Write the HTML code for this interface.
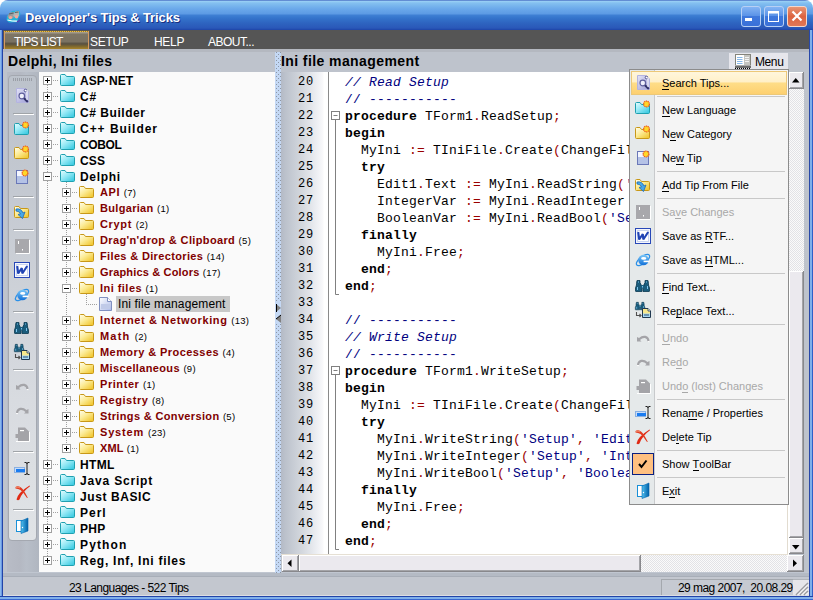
<!DOCTYPE html><html><head><meta charset="utf-8"><style>
*{margin:0;padding:0;box-sizing:border-box}
html,body{width:813px;height:600px;overflow:hidden;background:#fff;font-family:"Liberation Sans",sans-serif}
.a{position:absolute}
.t{position:absolute;white-space:nowrap;line-height:16px}
svg{position:absolute;left:0;top:0;overflow:visible}
#title{position:absolute;left:0;top:0;width:813px;height:30px;border-radius:8px 8px 0 0;
 background:linear-gradient(#2848b0 0,#9cd2f6 1px,#84c0f0 3px,#6aa8ea 9px,#5c9ae4 14px,#3f80d4 15px,#3474cc 18px,#2e64c0 23px,#2a58b8 28px,#1e44a8 30px)}
#ttext{position:absolute;left:25px;top:10px;color:#fff;font-weight:bold;font-size:13px;line-height:16px;text-shadow:1px 1px 0 #1a2e80;letter-spacing:-0.1px}
.wb{position:absolute;top:6px;width:20px;height:21px;border:1px solid #e8f0ff;border-radius:3px;
 background:linear-gradient(#78a8f0,#4a82e0 45%,#3a70d8 55%,#4a80e0)}
#mbar{position:absolute;left:3px;top:30px;width:806px;height:19px;background:#555555}
.mi{position:absolute;top:35px;color:#fff;font-size:12px;line-height:15px;letter-spacing:0px}
#panel{position:absolute;left:3px;top:49px;width:806px;height:547px;background:#bec3cc}
.hdr{position:absolute;font-weight:bold;font-size:13px;line-height:16px;color:#000;letter-spacing:0.7px}
.t1{font-weight:bold;font-size:12px;color:#000;letter-spacing:0.65px}
.t2{font-weight:bold;font-size:11px;color:#800000;letter-spacing:0.45px}
.cnt{font-size:9.5px;color:#000;font-weight:normal;letter-spacing:0.3px}
.ln{position:absolute;font-family:"Liberation Mono",monospace;font-size:13px;line-height:17px;color:#000;letter-spacing:0.2px;white-space:pre}
.kw{font-weight:bold}
.cm{color:#000080;font-style:italic}
.cd{color:#000080}
.sy{color:#9a0000}
.st{color:#000080}
.mt{position:absolute;left:662px;font-size:11px;line-height:14px;color:#000;white-space:nowrap}
.mt u{text-decoration:none;border-bottom:1px solid currentColor;line-height:11px;display:inline-block}
.dis{color:#a8a8a8}
.sep{position:absolute;left:657px;width:128px;height:1px;background:#c8c8c8}
</style></head><body>
<div class="a" style="left:0;top:0;width:813px;height:600px;background:#3262d0"></div>
<div class="a" style="left:0;top:0;width:813px;height:10px;background:#fff"></div>
<div class="a" style="left:0;top:30px;width:1px;height:570px;background:#8ab8ee"></div>
<div class="a" style="left:1px;top:30px;width:1px;height:570px;background:#6c9ae2"></div>
<div class="a" style="left:2px;top:30px;width:1px;height:570px;background:#2244a8"></div>
<div class="a" style="left:809px;top:30px;width:1px;height:570px;background:#2848a8"></div>
<div class="a" style="left:810px;top:30px;width:2px;height:570px;background:#80b0ea"></div>
<div class="a" style="left:812px;top:30px;width:1px;height:570px;background:#3060c8"></div>
<div class="a" style="left:0;top:596px;width:813px;height:1px;background:#2244a8"></div>
<div class="a" style="left:0;top:597px;width:813px;height:2px;background:#80b0ea"></div>
<div class="a" style="left:0;top:599px;width:813px;height:1px;background:#3a68d0"></div>
<div id="title"></div>
<div id="ttext">Developer's Tips &amp; Tricks</div>
<svg width="813" height="30" style="left:0;top:0">
<g transform="translate(6,10)">
<path d="M1,6 L6,1 L13,0.5 L14.5,4 L12,9 L13,12 L3,12.5 L0.5,10 Z" fill="#22b4d8"/>
<path d="M1.5,6 L4,2.5 L8,2 L7.5,8 L3,9 Z" fill="#9c9c9c"/><path d="M7,5.5 L9,1.5 L13,1 L13,6 L9.5,8 Z" fill="#b4b4b4"/>
<path d="M3,4 L7.5,3 M9,2.5 L12.5,2" stroke="#606060" stroke-width="1.2"/>
<circle cx="4.5" cy="7.6" r="1.7" fill="#f4a898"/><circle cx="10.5" cy="6.8" r="1.7" fill="#f4a898"/>
<path d="M1.5,10 Q6,11.2 11,11.2" stroke="#fff" stroke-width="1.2" fill="none"/>
<path d="M11,12 L13.5,10.5" stroke="#6030b0" stroke-width="1.4"/>
</g>
<defs><linearGradient id="wbg" x1="0" y1="0" x2="0" y2="1"><stop offset="0" stop-color="#86b6f4"/><stop offset="0.45" stop-color="#5c94e8"/><stop offset="0.5" stop-color="#3e78dc"/><stop offset="1" stop-color="#3a70d8"/></linearGradient>
<linearGradient id="wbc" x1="0" y1="0" x2="0" y2="1"><stop offset="0" stop-color="#e89878"/><stop offset="0.5" stop-color="#dc6440"/><stop offset="1" stop-color="#e07858"/></linearGradient></defs>
<rect x="741.5" y="6.5" width="19" height="20" rx="2.5" fill="url(#wbg)" stroke="#b8d0f4"/>
<rect x="745" y="18" width="7" height="3" fill="#fff"/>
<rect x="764.5" y="6.5" width="19" height="20" rx="2.5" fill="url(#wbg)" stroke="#b8d0f4"/>
<rect x="768.5" y="11.5" width="10" height="10" fill="none" stroke="#fff"/>
<rect x="768" y="11" width="11" height="2.5" fill="#fff"/>
<rect x="787.5" y="6.5" width="19" height="20" rx="2.5" fill="url(#wbc)" stroke="#f4d8cc"/>
<path d="M792.5,11.5 L801.5,20.5 M801.5,11.5 L792.5,20.5" stroke="#fff" stroke-width="2.2"/>
</svg>
<div id="mbar"></div>
<div class="a" style="left:4px;top:31px;width:85px;height:18px;border-left:1px solid #d89a60;border-right:1px solid #d89a60;border-top:1px dotted #f0c040;background:linear-gradient(#a8a090 0,#a09888 1px,#7e7666 2px,#7a7262 10px,#5e5646 11px,#5a5242 12px,#786430 14px,#a88428 17px)"></div>
<div class="mi" style="left:14px;letter-spacing:-0.75px">TIPS LIST</div>
<div class="mi" style="left:90px;letter-spacing:-0.3px">SETUP</div>
<div class="mi" style="left:154px;letter-spacing:-0.3px">HELP</div>
<div class="mi" style="left:208px;letter-spacing:-0.5px">ABOUT...</div>
<div id="panel"></div>
<div class="a" style="left:3px;top:49px;width:806px;height:3px;background:#b4b8c0"></div>
<div class="hdr" style="left:8px;top:53px;font-size:14px;letter-spacing:0.32px">Delphi, Ini files</div>
<div class="hdr" style="left:281px;top:53px;font-size:14px;letter-spacing:0.41px">Ini file management</div>
<div class="a" style="left:7px;top:72px;width:32px;height:500px;background:linear-gradient(90deg,#b8bcc6,#b4b8c2 40%,#b8bec8 60%,#b0b6c0)"></div>
<div class="a" style="left:8px;top:75px;width:29px;height:466px;border:1px solid #a4a8b0;border-radius:4px;background:linear-gradient(#bcc2cb,#c4c9d1 25%,#d8dbe0 70%,#e0e3e6)"></div>
<div class="a" style="left:3px;top:572px;width:806px;height:1px;background:#c0c6d0"></div>
<div class="a" style="left:3px;top:573px;width:806px;height:3px;background:#b4bac4"></div>
<div class="a" style="left:3px;top:576px;width:806px;height:1px;background:#a8aeb8"></div>
<div class="a" style="left:3px;top:577px;width:806px;height:18px;background:#c3c7cf"></div>
<div class="a" style="left:3px;top:595px;width:806px;height:1px;background:#dcdee2"></div>
<div class="t" style="left:69px;top:581px;font-size:12px;line-height:15px;letter-spacing:-0.55px">23 Languages - 522 Tips</div>
<div class="a" style="left:661px;top:579px;width:132px;height:16px;border-left:1px solid #a4a8ae;border-top:1px solid #a4a8ae;background:#c6cad2"></div>
<div class="t" style="left:678px;top:581px;font-size:12px;line-height:15px;white-space:pre;letter-spacing:-0.55px">29 mag 2007,  20.08.29</div>
<div class="a" style="left:793px;top:579px;width:16px;height:16px;background:#e6e6ea;border-top:1px solid #b0b4ba"></div>
<svg width="813" height="600"><path d="M796,595 L808,583 M800,595 L808,587 M804,595 L808,591" stroke="#9c9ca0" stroke-width="1.6"/><path d="M797.5,595 L808,584.5 M801.5,595 L808,588.5 M805.5,595 L808,592.5" stroke="#fff" stroke-width="0.9"/></svg>
<div class="a" style="left:39px;top:72px;width:236px;height:500px;background:#fafafa"></div>
<div class="t t1" style="left:80px;top:73px;letter-spacing:0.064px">ASP·NET</div>
<div class="t t1" style="left:80px;top:89px;letter-spacing:0.900px">C#</div>
<div class="t t1" style="left:80px;top:105px;letter-spacing:0.550px">C# Builder</div>
<div class="t t1" style="left:80px;top:121px;letter-spacing:0.968px">C++ Builder</div>
<div class="t t1" style="left:80px;top:137px;letter-spacing:-0.390px">COBOL</div>
<div class="t t1" style="left:80px;top:153px;letter-spacing:0.117px">CSS</div>
<div class="t t1" style="left:80px;top:169px;letter-spacing:0.700px">Delphi</div>
<div class="t t2" style="left:100px;top:184px;letter-spacing:0.583px">API <span class="cnt">(7)</span></div>
<div class="t t2" style="left:100px;top:200px;letter-spacing:0.317px">Bulgarian <span class="cnt">(1)</span></div>
<div class="t t2" style="left:100px;top:216px;letter-spacing:0.650px">Crypt <span class="cnt">(2)</span></div>
<div class="t t2" style="left:100px;top:232px;letter-spacing:0.363px">Drag'n'drop &amp; Clipboard <span class="cnt">(5)</span></div>
<div class="t t2" style="left:100px;top:248px;letter-spacing:0.350px">Files &amp; Directories <span class="cnt">(14)</span></div>
<div class="t t2" style="left:100px;top:264px;letter-spacing:0.168px">Graphics &amp; Colors <span class="cnt">(17)</span></div>
<div class="t t2" style="left:100px;top:280px;letter-spacing:0.461px">Ini files <span class="cnt">(1)</span></div>
<div class="a" style="left:116px;top:296px;width:114px;height:16px;background:#c8c8c8"></div>
<div class="t" style="left:118px;top:296px;font-size:12px;letter-spacing:0.15px">Ini file management</div>
<div class="t t2" style="left:100px;top:312px;letter-spacing:0.631px">Internet &amp; Networking <span class="cnt">(13)</span></div>
<div class="t t2" style="left:100px;top:328px;letter-spacing:1.200px">Math <span class="cnt">(2)</span></div>
<div class="t t2" style="left:100px;top:344px;letter-spacing:0.428px">Memory &amp; Processes <span class="cnt">(4)</span></div>
<div class="t t2" style="left:100px;top:360px;letter-spacing:0.365px">Miscellaneous <span class="cnt">(9)</span></div>
<div class="t t2" style="left:100px;top:376px;letter-spacing:0.564px">Printer <span class="cnt">(1)</span></div>
<div class="t t2" style="left:100px;top:392px;letter-spacing:0.550px">Registry <span class="cnt">(8)</span></div>
<div class="t t2" style="left:100px;top:408px;letter-spacing:0.350px">Strings &amp; Conversion <span class="cnt">(5)</span></div>
<div class="t t2" style="left:100px;top:424px;letter-spacing:0.817px">System <span class="cnt">(23)</span></div>
<div class="t t2" style="left:100px;top:440px;letter-spacing:0.150px">XML <span class="cnt">(1)</span></div>
<div class="t t1" style="left:80px;top:457px;letter-spacing:0.325px">HTML</div>
<div class="t t1" style="left:80px;top:473px;letter-spacing:0.823px">Java Script</div>
<div class="t t1" style="left:80px;top:489px;letter-spacing:0.580px">Just BASIC</div>
<div class="t t1" style="left:80px;top:505px;letter-spacing:0.975px">Perl</div>
<div class="t t1" style="left:80px;top:521px;letter-spacing:0.283px">PHP</div>
<div class="t t1" style="left:80px;top:537px;letter-spacing:1.150px">Python</div>
<div class="t t1" style="left:80px;top:553px;letter-spacing:0.745px">Reg, Inf, Ini files</div>
<svg width="813" height="600"><defs><linearGradient id="gc" x1="0" y1="0" x2="0.9" y2="1"><stop offset="0" stop-color="#e8fdff"/><stop offset="0.45" stop-color="#98eaf6"/><stop offset="1" stop-color="#34c8e0"/></linearGradient><linearGradient id="gy" x1="0" y1="0" x2="0.9" y2="1"><stop offset="0" stop-color="#fffef0"/><stop offset="0.45" stop-color="#fcec98"/><stop offset="1" stop-color="#f0c428"/></linearGradient><linearGradient id="gd" x1="0" y1="0" x2="1" y2="1"><stop offset="0" stop-color="#ffffff"/><stop offset="1" stop-color="#aab8e8"/></linearGradient></defs><rect x="47" y="85" width="1" height="1" fill="#a0a0a0"/><rect x="47" y="87" width="1" height="1" fill="#a0a0a0"/><rect x="47" y="89" width="1" height="1" fill="#a0a0a0"/><rect x="47" y="91" width="1" height="1" fill="#a0a0a0"/><rect x="47" y="93" width="1" height="1" fill="#a0a0a0"/><rect x="47" y="95" width="1" height="1" fill="#a0a0a0"/><rect x="47" y="97" width="1" height="1" fill="#a0a0a0"/><rect x="47" y="99" width="1" height="1" fill="#a0a0a0"/><rect x="47" y="101" width="1" height="1" fill="#a0a0a0"/><rect x="47" y="103" width="1" height="1" fill="#a0a0a0"/><rect x="47" y="105" width="1" height="1" fill="#a0a0a0"/><rect x="47" y="107" width="1" height="1" fill="#a0a0a0"/><rect x="47" y="109" width="1" height="1" fill="#a0a0a0"/><rect x="47" y="111" width="1" height="1" fill="#a0a0a0"/><rect x="47" y="113" width="1" height="1" fill="#a0a0a0"/><rect x="47" y="115" width="1" height="1" fill="#a0a0a0"/><rect x="47" y="117" width="1" height="1" fill="#a0a0a0"/><rect x="47" y="119" width="1" height="1" fill="#a0a0a0"/><rect x="47" y="121" width="1" height="1" fill="#a0a0a0"/><rect x="47" y="123" width="1" height="1" fill="#a0a0a0"/><rect x="47" y="125" width="1" height="1" fill="#a0a0a0"/><rect x="47" y="127" width="1" height="1" fill="#a0a0a0"/><rect x="47" y="129" width="1" height="1" fill="#a0a0a0"/><rect x="47" y="131" width="1" height="1" fill="#a0a0a0"/><rect x="47" y="133" width="1" height="1" fill="#a0a0a0"/><rect x="47" y="135" width="1" height="1" fill="#a0a0a0"/><rect x="47" y="137" width="1" height="1" fill="#a0a0a0"/><rect x="47" y="139" width="1" height="1" fill="#a0a0a0"/><rect x="47" y="141" width="1" height="1" fill="#a0a0a0"/><rect x="47" y="143" width="1" height="1" fill="#a0a0a0"/><rect x="47" y="145" width="1" height="1" fill="#a0a0a0"/><rect x="47" y="147" width="1" height="1" fill="#a0a0a0"/><rect x="47" y="149" width="1" height="1" fill="#a0a0a0"/><rect x="47" y="151" width="1" height="1" fill="#a0a0a0"/><rect x="47" y="153" width="1" height="1" fill="#a0a0a0"/><rect x="47" y="155" width="1" height="1" fill="#a0a0a0"/><rect x="47" y="157" width="1" height="1" fill="#a0a0a0"/><rect x="47" y="159" width="1" height="1" fill="#a0a0a0"/><rect x="47" y="161" width="1" height="1" fill="#a0a0a0"/><rect x="47" y="163" width="1" height="1" fill="#a0a0a0"/><rect x="47" y="165" width="1" height="1" fill="#a0a0a0"/><rect x="47" y="167" width="1" height="1" fill="#a0a0a0"/><rect x="47" y="169" width="1" height="1" fill="#a0a0a0"/><rect x="47" y="171" width="1" height="1" fill="#a0a0a0"/><rect x="47" y="173" width="1" height="1" fill="#a0a0a0"/><rect x="47" y="175" width="1" height="1" fill="#a0a0a0"/><rect x="47" y="177" width="1" height="1" fill="#a0a0a0"/><rect x="47" y="179" width="1" height="1" fill="#a0a0a0"/><rect x="47" y="181" width="1" height="1" fill="#a0a0a0"/><rect x="47" y="183" width="1" height="1" fill="#a0a0a0"/><rect x="47" y="185" width="1" height="1" fill="#a0a0a0"/><rect x="47" y="187" width="1" height="1" fill="#a0a0a0"/><rect x="47" y="189" width="1" height="1" fill="#a0a0a0"/><rect x="47" y="191" width="1" height="1" fill="#a0a0a0"/><rect x="47" y="193" width="1" height="1" fill="#a0a0a0"/><rect x="47" y="195" width="1" height="1" fill="#a0a0a0"/><rect x="47" y="197" width="1" height="1" fill="#a0a0a0"/><rect x="47" y="199" width="1" height="1" fill="#a0a0a0"/><rect x="47" y="201" width="1" height="1" fill="#a0a0a0"/><rect x="47" y="203" width="1" height="1" fill="#a0a0a0"/><rect x="47" y="205" width="1" height="1" fill="#a0a0a0"/><rect x="47" y="207" width="1" height="1" fill="#a0a0a0"/><rect x="47" y="209" width="1" height="1" fill="#a0a0a0"/><rect x="47" y="211" width="1" height="1" fill="#a0a0a0"/><rect x="47" y="213" width="1" height="1" fill="#a0a0a0"/><rect x="47" y="215" width="1" height="1" fill="#a0a0a0"/><rect x="47" y="217" width="1" height="1" fill="#a0a0a0"/><rect x="47" y="219" width="1" height="1" fill="#a0a0a0"/><rect x="47" y="221" width="1" height="1" fill="#a0a0a0"/><rect x="47" y="223" width="1" height="1" fill="#a0a0a0"/><rect x="47" y="225" width="1" height="1" fill="#a0a0a0"/><rect x="47" y="227" width="1" height="1" fill="#a0a0a0"/><rect x="47" y="229" width="1" height="1" fill="#a0a0a0"/><rect x="47" y="231" width="1" height="1" fill="#a0a0a0"/><rect x="47" y="233" width="1" height="1" fill="#a0a0a0"/><rect x="47" y="235" width="1" height="1" fill="#a0a0a0"/><rect x="47" y="237" width="1" height="1" fill="#a0a0a0"/><rect x="47" y="239" width="1" height="1" fill="#a0a0a0"/><rect x="47" y="241" width="1" height="1" fill="#a0a0a0"/><rect x="47" y="243" width="1" height="1" fill="#a0a0a0"/><rect x="47" y="245" width="1" height="1" fill="#a0a0a0"/><rect x="47" y="247" width="1" height="1" fill="#a0a0a0"/><rect x="47" y="249" width="1" height="1" fill="#a0a0a0"/><rect x="47" y="251" width="1" height="1" fill="#a0a0a0"/><rect x="47" y="253" width="1" height="1" fill="#a0a0a0"/><rect x="47" y="255" width="1" height="1" fill="#a0a0a0"/><rect x="47" y="257" width="1" height="1" fill="#a0a0a0"/><rect x="47" y="259" width="1" height="1" fill="#a0a0a0"/><rect x="47" y="261" width="1" height="1" fill="#a0a0a0"/><rect x="47" y="263" width="1" height="1" fill="#a0a0a0"/><rect x="47" y="265" width="1" height="1" fill="#a0a0a0"/><rect x="47" y="267" width="1" height="1" fill="#a0a0a0"/><rect x="47" y="269" width="1" height="1" fill="#a0a0a0"/><rect x="47" y="271" width="1" height="1" fill="#a0a0a0"/><rect x="47" y="273" width="1" height="1" fill="#a0a0a0"/><rect x="47" y="275" width="1" height="1" fill="#a0a0a0"/><rect x="47" y="277" width="1" height="1" fill="#a0a0a0"/><rect x="47" y="279" width="1" height="1" fill="#a0a0a0"/><rect x="47" y="281" width="1" height="1" fill="#a0a0a0"/><rect x="47" y="283" width="1" height="1" fill="#a0a0a0"/><rect x="47" y="285" width="1" height="1" fill="#a0a0a0"/><rect x="47" y="287" width="1" height="1" fill="#a0a0a0"/><rect x="47" y="289" width="1" height="1" fill="#a0a0a0"/><rect x="47" y="291" width="1" height="1" fill="#a0a0a0"/><rect x="47" y="293" width="1" height="1" fill="#a0a0a0"/><rect x="47" y="295" width="1" height="1" fill="#a0a0a0"/><rect x="47" y="297" width="1" height="1" fill="#a0a0a0"/><rect x="47" y="299" width="1" height="1" fill="#a0a0a0"/><rect x="47" y="301" width="1" height="1" fill="#a0a0a0"/><rect x="47" y="303" width="1" height="1" fill="#a0a0a0"/><rect x="47" y="305" width="1" height="1" fill="#a0a0a0"/><rect x="47" y="307" width="1" height="1" fill="#a0a0a0"/><rect x="47" y="309" width="1" height="1" fill="#a0a0a0"/><rect x="47" y="311" width="1" height="1" fill="#a0a0a0"/><rect x="47" y="313" width="1" height="1" fill="#a0a0a0"/><rect x="47" y="315" width="1" height="1" fill="#a0a0a0"/><rect x="47" y="317" width="1" height="1" fill="#a0a0a0"/><rect x="47" y="319" width="1" height="1" fill="#a0a0a0"/><rect x="47" y="321" width="1" height="1" fill="#a0a0a0"/><rect x="47" y="323" width="1" height="1" fill="#a0a0a0"/><rect x="47" y="325" width="1" height="1" fill="#a0a0a0"/><rect x="47" y="327" width="1" height="1" fill="#a0a0a0"/><rect x="47" y="329" width="1" height="1" fill="#a0a0a0"/><rect x="47" y="331" width="1" height="1" fill="#a0a0a0"/><rect x="47" y="333" width="1" height="1" fill="#a0a0a0"/><rect x="47" y="335" width="1" height="1" fill="#a0a0a0"/><rect x="47" y="337" width="1" height="1" fill="#a0a0a0"/><rect x="47" y="339" width="1" height="1" fill="#a0a0a0"/><rect x="47" y="341" width="1" height="1" fill="#a0a0a0"/><rect x="47" y="343" width="1" height="1" fill="#a0a0a0"/><rect x="47" y="345" width="1" height="1" fill="#a0a0a0"/><rect x="47" y="347" width="1" height="1" fill="#a0a0a0"/><rect x="47" y="349" width="1" height="1" fill="#a0a0a0"/><rect x="47" y="351" width="1" height="1" fill="#a0a0a0"/><rect x="47" y="353" width="1" height="1" fill="#a0a0a0"/><rect x="47" y="355" width="1" height="1" fill="#a0a0a0"/><rect x="47" y="357" width="1" height="1" fill="#a0a0a0"/><rect x="47" y="359" width="1" height="1" fill="#a0a0a0"/><rect x="47" y="361" width="1" height="1" fill="#a0a0a0"/><rect x="47" y="363" width="1" height="1" fill="#a0a0a0"/><rect x="47" y="365" width="1" height="1" fill="#a0a0a0"/><rect x="47" y="367" width="1" height="1" fill="#a0a0a0"/><rect x="47" y="369" width="1" height="1" fill="#a0a0a0"/><rect x="47" y="371" width="1" height="1" fill="#a0a0a0"/><rect x="47" y="373" width="1" height="1" fill="#a0a0a0"/><rect x="47" y="375" width="1" height="1" fill="#a0a0a0"/><rect x="47" y="377" width="1" height="1" fill="#a0a0a0"/><rect x="47" y="379" width="1" height="1" fill="#a0a0a0"/><rect x="47" y="381" width="1" height="1" fill="#a0a0a0"/><rect x="47" y="383" width="1" height="1" fill="#a0a0a0"/><rect x="47" y="385" width="1" height="1" fill="#a0a0a0"/><rect x="47" y="387" width="1" height="1" fill="#a0a0a0"/><rect x="47" y="389" width="1" height="1" fill="#a0a0a0"/><rect x="47" y="391" width="1" height="1" fill="#a0a0a0"/><rect x="47" y="393" width="1" height="1" fill="#a0a0a0"/><rect x="47" y="395" width="1" height="1" fill="#a0a0a0"/><rect x="47" y="397" width="1" height="1" fill="#a0a0a0"/><rect x="47" y="399" width="1" height="1" fill="#a0a0a0"/><rect x="47" y="401" width="1" height="1" fill="#a0a0a0"/><rect x="47" y="403" width="1" height="1" fill="#a0a0a0"/><rect x="47" y="405" width="1" height="1" fill="#a0a0a0"/><rect x="47" y="407" width="1" height="1" fill="#a0a0a0"/><rect x="47" y="409" width="1" height="1" fill="#a0a0a0"/><rect x="47" y="411" width="1" height="1" fill="#a0a0a0"/><rect x="47" y="413" width="1" height="1" fill="#a0a0a0"/><rect x="47" y="415" width="1" height="1" fill="#a0a0a0"/><rect x="47" y="417" width="1" height="1" fill="#a0a0a0"/><rect x="47" y="419" width="1" height="1" fill="#a0a0a0"/><rect x="47" y="421" width="1" height="1" fill="#a0a0a0"/><rect x="47" y="423" width="1" height="1" fill="#a0a0a0"/><rect x="47" y="425" width="1" height="1" fill="#a0a0a0"/><rect x="47" y="427" width="1" height="1" fill="#a0a0a0"/><rect x="47" y="429" width="1" height="1" fill="#a0a0a0"/><rect x="47" y="431" width="1" height="1" fill="#a0a0a0"/><rect x="47" y="433" width="1" height="1" fill="#a0a0a0"/><rect x="47" y="435" width="1" height="1" fill="#a0a0a0"/><rect x="47" y="437" width="1" height="1" fill="#a0a0a0"/><rect x="47" y="439" width="1" height="1" fill="#a0a0a0"/><rect x="47" y="441" width="1" height="1" fill="#a0a0a0"/><rect x="47" y="443" width="1" height="1" fill="#a0a0a0"/><rect x="47" y="445" width="1" height="1" fill="#a0a0a0"/><rect x="47" y="447" width="1" height="1" fill="#a0a0a0"/><rect x="47" y="449" width="1" height="1" fill="#a0a0a0"/><rect x="47" y="451" width="1" height="1" fill="#a0a0a0"/><rect x="47" y="453" width="1" height="1" fill="#a0a0a0"/><rect x="47" y="455" width="1" height="1" fill="#a0a0a0"/><rect x="47" y="457" width="1" height="1" fill="#a0a0a0"/><rect x="47" y="459" width="1" height="1" fill="#a0a0a0"/><rect x="47" y="461" width="1" height="1" fill="#a0a0a0"/><rect x="47" y="463" width="1" height="1" fill="#a0a0a0"/><rect x="47" y="465" width="1" height="1" fill="#a0a0a0"/><rect x="47" y="467" width="1" height="1" fill="#a0a0a0"/><rect x="47" y="469" width="1" height="1" fill="#a0a0a0"/><rect x="47" y="471" width="1" height="1" fill="#a0a0a0"/><rect x="47" y="473" width="1" height="1" fill="#a0a0a0"/><rect x="47" y="475" width="1" height="1" fill="#a0a0a0"/><rect x="47" y="477" width="1" height="1" fill="#a0a0a0"/><rect x="47" y="479" width="1" height="1" fill="#a0a0a0"/><rect x="47" y="481" width="1" height="1" fill="#a0a0a0"/><rect x="47" y="483" width="1" height="1" fill="#a0a0a0"/><rect x="47" y="485" width="1" height="1" fill="#a0a0a0"/><rect x="47" y="487" width="1" height="1" fill="#a0a0a0"/><rect x="47" y="489" width="1" height="1" fill="#a0a0a0"/><rect x="47" y="491" width="1" height="1" fill="#a0a0a0"/><rect x="47" y="493" width="1" height="1" fill="#a0a0a0"/><rect x="47" y="495" width="1" height="1" fill="#a0a0a0"/><rect x="47" y="497" width="1" height="1" fill="#a0a0a0"/><rect x="47" y="499" width="1" height="1" fill="#a0a0a0"/><rect x="47" y="501" width="1" height="1" fill="#a0a0a0"/><rect x="47" y="503" width="1" height="1" fill="#a0a0a0"/><rect x="47" y="505" width="1" height="1" fill="#a0a0a0"/><rect x="47" y="507" width="1" height="1" fill="#a0a0a0"/><rect x="47" y="509" width="1" height="1" fill="#a0a0a0"/><rect x="47" y="511" width="1" height="1" fill="#a0a0a0"/><rect x="47" y="513" width="1" height="1" fill="#a0a0a0"/><rect x="47" y="515" width="1" height="1" fill="#a0a0a0"/><rect x="47" y="517" width="1" height="1" fill="#a0a0a0"/><rect x="47" y="519" width="1" height="1" fill="#a0a0a0"/><rect x="47" y="521" width="1" height="1" fill="#a0a0a0"/><rect x="47" y="523" width="1" height="1" fill="#a0a0a0"/><rect x="47" y="525" width="1" height="1" fill="#a0a0a0"/><rect x="47" y="527" width="1" height="1" fill="#a0a0a0"/><rect x="47" y="529" width="1" height="1" fill="#a0a0a0"/><rect x="47" y="531" width="1" height="1" fill="#a0a0a0"/><rect x="47" y="533" width="1" height="1" fill="#a0a0a0"/><rect x="47" y="535" width="1" height="1" fill="#a0a0a0"/><rect x="47" y="537" width="1" height="1" fill="#a0a0a0"/><rect x="47" y="539" width="1" height="1" fill="#a0a0a0"/><rect x="47" y="541" width="1" height="1" fill="#a0a0a0"/><rect x="47" y="543" width="1" height="1" fill="#a0a0a0"/><rect x="47" y="545" width="1" height="1" fill="#a0a0a0"/><rect x="47" y="547" width="1" height="1" fill="#a0a0a0"/><rect x="47" y="549" width="1" height="1" fill="#a0a0a0"/><rect x="47" y="551" width="1" height="1" fill="#a0a0a0"/><rect x="47" y="553" width="1" height="1" fill="#a0a0a0"/><rect x="47" y="555" width="1" height="1" fill="#a0a0a0"/><rect x="66" y="182" width="1" height="1" fill="#a0a0a0"/><rect x="66" y="184" width="1" height="1" fill="#a0a0a0"/><rect x="66" y="186" width="1" height="1" fill="#a0a0a0"/><rect x="66" y="188" width="1" height="1" fill="#a0a0a0"/><rect x="66" y="190" width="1" height="1" fill="#a0a0a0"/><rect x="66" y="192" width="1" height="1" fill="#a0a0a0"/><rect x="66" y="194" width="1" height="1" fill="#a0a0a0"/><rect x="66" y="196" width="1" height="1" fill="#a0a0a0"/><rect x="66" y="198" width="1" height="1" fill="#a0a0a0"/><rect x="66" y="200" width="1" height="1" fill="#a0a0a0"/><rect x="66" y="202" width="1" height="1" fill="#a0a0a0"/><rect x="66" y="204" width="1" height="1" fill="#a0a0a0"/><rect x="66" y="206" width="1" height="1" fill="#a0a0a0"/><rect x="66" y="208" width="1" height="1" fill="#a0a0a0"/><rect x="66" y="210" width="1" height="1" fill="#a0a0a0"/><rect x="66" y="212" width="1" height="1" fill="#a0a0a0"/><rect x="66" y="214" width="1" height="1" fill="#a0a0a0"/><rect x="66" y="216" width="1" height="1" fill="#a0a0a0"/><rect x="66" y="218" width="1" height="1" fill="#a0a0a0"/><rect x="66" y="220" width="1" height="1" fill="#a0a0a0"/><rect x="66" y="222" width="1" height="1" fill="#a0a0a0"/><rect x="66" y="224" width="1" height="1" fill="#a0a0a0"/><rect x="66" y="226" width="1" height="1" fill="#a0a0a0"/><rect x="66" y="228" width="1" height="1" fill="#a0a0a0"/><rect x="66" y="230" width="1" height="1" fill="#a0a0a0"/><rect x="66" y="232" width="1" height="1" fill="#a0a0a0"/><rect x="66" y="234" width="1" height="1" fill="#a0a0a0"/><rect x="66" y="236" width="1" height="1" fill="#a0a0a0"/><rect x="66" y="238" width="1" height="1" fill="#a0a0a0"/><rect x="66" y="240" width="1" height="1" fill="#a0a0a0"/><rect x="66" y="242" width="1" height="1" fill="#a0a0a0"/><rect x="66" y="244" width="1" height="1" fill="#a0a0a0"/><rect x="66" y="246" width="1" height="1" fill="#a0a0a0"/><rect x="66" y="248" width="1" height="1" fill="#a0a0a0"/><rect x="66" y="250" width="1" height="1" fill="#a0a0a0"/><rect x="66" y="252" width="1" height="1" fill="#a0a0a0"/><rect x="66" y="254" width="1" height="1" fill="#a0a0a0"/><rect x="66" y="256" width="1" height="1" fill="#a0a0a0"/><rect x="66" y="258" width="1" height="1" fill="#a0a0a0"/><rect x="66" y="260" width="1" height="1" fill="#a0a0a0"/><rect x="66" y="262" width="1" height="1" fill="#a0a0a0"/><rect x="66" y="264" width="1" height="1" fill="#a0a0a0"/><rect x="66" y="266" width="1" height="1" fill="#a0a0a0"/><rect x="66" y="268" width="1" height="1" fill="#a0a0a0"/><rect x="66" y="270" width="1" height="1" fill="#a0a0a0"/><rect x="66" y="272" width="1" height="1" fill="#a0a0a0"/><rect x="66" y="274" width="1" height="1" fill="#a0a0a0"/><rect x="66" y="276" width="1" height="1" fill="#a0a0a0"/><rect x="66" y="278" width="1" height="1" fill="#a0a0a0"/><rect x="66" y="280" width="1" height="1" fill="#a0a0a0"/><rect x="66" y="282" width="1" height="1" fill="#a0a0a0"/><rect x="66" y="284" width="1" height="1" fill="#a0a0a0"/><rect x="66" y="286" width="1" height="1" fill="#a0a0a0"/><rect x="66" y="288" width="1" height="1" fill="#a0a0a0"/><rect x="66" y="290" width="1" height="1" fill="#a0a0a0"/><rect x="66" y="292" width="1" height="1" fill="#a0a0a0"/><rect x="66" y="294" width="1" height="1" fill="#a0a0a0"/><rect x="66" y="296" width="1" height="1" fill="#a0a0a0"/><rect x="66" y="298" width="1" height="1" fill="#a0a0a0"/><rect x="66" y="300" width="1" height="1" fill="#a0a0a0"/><rect x="66" y="302" width="1" height="1" fill="#a0a0a0"/><rect x="66" y="304" width="1" height="1" fill="#a0a0a0"/><rect x="66" y="306" width="1" height="1" fill="#a0a0a0"/><rect x="66" y="308" width="1" height="1" fill="#a0a0a0"/><rect x="66" y="310" width="1" height="1" fill="#a0a0a0"/><rect x="66" y="312" width="1" height="1" fill="#a0a0a0"/><rect x="66" y="314" width="1" height="1" fill="#a0a0a0"/><rect x="66" y="316" width="1" height="1" fill="#a0a0a0"/><rect x="66" y="318" width="1" height="1" fill="#a0a0a0"/><rect x="66" y="320" width="1" height="1" fill="#a0a0a0"/><rect x="66" y="322" width="1" height="1" fill="#a0a0a0"/><rect x="66" y="324" width="1" height="1" fill="#a0a0a0"/><rect x="66" y="326" width="1" height="1" fill="#a0a0a0"/><rect x="66" y="328" width="1" height="1" fill="#a0a0a0"/><rect x="66" y="330" width="1" height="1" fill="#a0a0a0"/><rect x="66" y="332" width="1" height="1" fill="#a0a0a0"/><rect x="66" y="334" width="1" height="1" fill="#a0a0a0"/><rect x="66" y="336" width="1" height="1" fill="#a0a0a0"/><rect x="66" y="338" width="1" height="1" fill="#a0a0a0"/><rect x="66" y="340" width="1" height="1" fill="#a0a0a0"/><rect x="66" y="342" width="1" height="1" fill="#a0a0a0"/><rect x="66" y="344" width="1" height="1" fill="#a0a0a0"/><rect x="66" y="346" width="1" height="1" fill="#a0a0a0"/><rect x="66" y="348" width="1" height="1" fill="#a0a0a0"/><rect x="66" y="350" width="1" height="1" fill="#a0a0a0"/><rect x="66" y="352" width="1" height="1" fill="#a0a0a0"/><rect x="66" y="354" width="1" height="1" fill="#a0a0a0"/><rect x="66" y="356" width="1" height="1" fill="#a0a0a0"/><rect x="66" y="358" width="1" height="1" fill="#a0a0a0"/><rect x="66" y="360" width="1" height="1" fill="#a0a0a0"/><rect x="66" y="362" width="1" height="1" fill="#a0a0a0"/><rect x="66" y="364" width="1" height="1" fill="#a0a0a0"/><rect x="66" y="366" width="1" height="1" fill="#a0a0a0"/><rect x="66" y="368" width="1" height="1" fill="#a0a0a0"/><rect x="66" y="370" width="1" height="1" fill="#a0a0a0"/><rect x="66" y="372" width="1" height="1" fill="#a0a0a0"/><rect x="66" y="374" width="1" height="1" fill="#a0a0a0"/><rect x="66" y="376" width="1" height="1" fill="#a0a0a0"/><rect x="66" y="378" width="1" height="1" fill="#a0a0a0"/><rect x="66" y="380" width="1" height="1" fill="#a0a0a0"/><rect x="66" y="382" width="1" height="1" fill="#a0a0a0"/><rect x="66" y="384" width="1" height="1" fill="#a0a0a0"/><rect x="66" y="386" width="1" height="1" fill="#a0a0a0"/><rect x="66" y="388" width="1" height="1" fill="#a0a0a0"/><rect x="66" y="390" width="1" height="1" fill="#a0a0a0"/><rect x="66" y="392" width="1" height="1" fill="#a0a0a0"/><rect x="66" y="394" width="1" height="1" fill="#a0a0a0"/><rect x="66" y="396" width="1" height="1" fill="#a0a0a0"/><rect x="66" y="398" width="1" height="1" fill="#a0a0a0"/><rect x="66" y="400" width="1" height="1" fill="#a0a0a0"/><rect x="66" y="402" width="1" height="1" fill="#a0a0a0"/><rect x="66" y="404" width="1" height="1" fill="#a0a0a0"/><rect x="66" y="406" width="1" height="1" fill="#a0a0a0"/><rect x="66" y="408" width="1" height="1" fill="#a0a0a0"/><rect x="66" y="410" width="1" height="1" fill="#a0a0a0"/><rect x="66" y="412" width="1" height="1" fill="#a0a0a0"/><rect x="66" y="414" width="1" height="1" fill="#a0a0a0"/><rect x="66" y="416" width="1" height="1" fill="#a0a0a0"/><rect x="66" y="418" width="1" height="1" fill="#a0a0a0"/><rect x="66" y="420" width="1" height="1" fill="#a0a0a0"/><rect x="66" y="422" width="1" height="1" fill="#a0a0a0"/><rect x="66" y="424" width="1" height="1" fill="#a0a0a0"/><rect x="66" y="426" width="1" height="1" fill="#a0a0a0"/><rect x="66" y="428" width="1" height="1" fill="#a0a0a0"/><rect x="66" y="430" width="1" height="1" fill="#a0a0a0"/><rect x="66" y="432" width="1" height="1" fill="#a0a0a0"/><rect x="66" y="434" width="1" height="1" fill="#a0a0a0"/><rect x="66" y="436" width="1" height="1" fill="#a0a0a0"/><rect x="66" y="438" width="1" height="1" fill="#a0a0a0"/><rect x="66" y="440" width="1" height="1" fill="#a0a0a0"/><rect x="66" y="442" width="1" height="1" fill="#a0a0a0"/><rect x="86" y="294" width="1" height="1" fill="#a0a0a0"/><rect x="86" y="296" width="1" height="1" fill="#a0a0a0"/><rect x="86" y="298" width="1" height="1" fill="#a0a0a0"/><rect x="86" y="300" width="1" height="1" fill="#a0a0a0"/><rect x="86" y="302" width="1" height="1" fill="#a0a0a0"/><rect x="86" y="304" width="1" height="1" fill="#a0a0a0"/><rect x="43.5" y="76.5" width="8" height="8" fill="#fff" stroke="#a0a0a0"/><path d="M45,80.5 H50" stroke="#000"/><path d="M47.5,78 V83" stroke="#000"/><rect x="53" y="80" width="1" height="1" fill="#a0a0a0"/><rect x="55" y="80" width="1" height="1" fill="#a0a0a0"/><rect x="57" y="80" width="1" height="1" fill="#a0a0a0"/><g transform="translate(60,74)"><path d="M0.5,10.5 V1.5 Q0.5,0.5 1.5,0.5 H5 L6.5,2.5 H13.5 Q14.5,2.5 14.5,3.5 V10.5 Q14.5,11.5 13.5,11.5 H1.5 Q0.5,11.5 0.5,10.5 Z" fill="url(#gc)" stroke="#20a0b0"/></g><rect x="43.5" y="92.5" width="8" height="8" fill="#fff" stroke="#a0a0a0"/><path d="M45,96.5 H50" stroke="#000"/><path d="M47.5,94 V99" stroke="#000"/><rect x="53" y="96" width="1" height="1" fill="#a0a0a0"/><rect x="55" y="96" width="1" height="1" fill="#a0a0a0"/><rect x="57" y="96" width="1" height="1" fill="#a0a0a0"/><g transform="translate(60,90)"><path d="M0.5,10.5 V1.5 Q0.5,0.5 1.5,0.5 H5 L6.5,2.5 H13.5 Q14.5,2.5 14.5,3.5 V10.5 Q14.5,11.5 13.5,11.5 H1.5 Q0.5,11.5 0.5,10.5 Z" fill="url(#gc)" stroke="#20a0b0"/></g><rect x="43.5" y="108.5" width="8" height="8" fill="#fff" stroke="#a0a0a0"/><path d="M45,112.5 H50" stroke="#000"/><path d="M47.5,110 V115" stroke="#000"/><rect x="53" y="112" width="1" height="1" fill="#a0a0a0"/><rect x="55" y="112" width="1" height="1" fill="#a0a0a0"/><rect x="57" y="112" width="1" height="1" fill="#a0a0a0"/><g transform="translate(60,106)"><path d="M0.5,10.5 V1.5 Q0.5,0.5 1.5,0.5 H5 L6.5,2.5 H13.5 Q14.5,2.5 14.5,3.5 V10.5 Q14.5,11.5 13.5,11.5 H1.5 Q0.5,11.5 0.5,10.5 Z" fill="url(#gc)" stroke="#20a0b0"/></g><rect x="43.5" y="124.5" width="8" height="8" fill="#fff" stroke="#a0a0a0"/><path d="M45,128.5 H50" stroke="#000"/><path d="M47.5,126 V131" stroke="#000"/><rect x="53" y="128" width="1" height="1" fill="#a0a0a0"/><rect x="55" y="128" width="1" height="1" fill="#a0a0a0"/><rect x="57" y="128" width="1" height="1" fill="#a0a0a0"/><g transform="translate(60,122)"><path d="M0.5,10.5 V1.5 Q0.5,0.5 1.5,0.5 H5 L6.5,2.5 H13.5 Q14.5,2.5 14.5,3.5 V10.5 Q14.5,11.5 13.5,11.5 H1.5 Q0.5,11.5 0.5,10.5 Z" fill="url(#gc)" stroke="#20a0b0"/></g><rect x="43.5" y="140.5" width="8" height="8" fill="#fff" stroke="#a0a0a0"/><path d="M45,144.5 H50" stroke="#000"/><path d="M47.5,142 V147" stroke="#000"/><rect x="53" y="144" width="1" height="1" fill="#a0a0a0"/><rect x="55" y="144" width="1" height="1" fill="#a0a0a0"/><rect x="57" y="144" width="1" height="1" fill="#a0a0a0"/><g transform="translate(60,138)"><path d="M0.5,10.5 V1.5 Q0.5,0.5 1.5,0.5 H5 L6.5,2.5 H13.5 Q14.5,2.5 14.5,3.5 V10.5 Q14.5,11.5 13.5,11.5 H1.5 Q0.5,11.5 0.5,10.5 Z" fill="url(#gc)" stroke="#20a0b0"/></g><rect x="43.5" y="156.5" width="8" height="8" fill="#fff" stroke="#a0a0a0"/><path d="M45,160.5 H50" stroke="#000"/><path d="M47.5,158 V163" stroke="#000"/><rect x="53" y="160" width="1" height="1" fill="#a0a0a0"/><rect x="55" y="160" width="1" height="1" fill="#a0a0a0"/><rect x="57" y="160" width="1" height="1" fill="#a0a0a0"/><g transform="translate(60,154)"><path d="M0.5,10.5 V1.5 Q0.5,0.5 1.5,0.5 H5 L6.5,2.5 H13.5 Q14.5,2.5 14.5,3.5 V10.5 Q14.5,11.5 13.5,11.5 H1.5 Q0.5,11.5 0.5,10.5 Z" fill="url(#gc)" stroke="#20a0b0"/></g><rect x="43.5" y="172.5" width="8" height="8" fill="#fff" stroke="#a0a0a0"/><path d="M45,176.5 H50" stroke="#000"/><rect x="53" y="176" width="1" height="1" fill="#a0a0a0"/><rect x="55" y="176" width="1" height="1" fill="#a0a0a0"/><rect x="57" y="176" width="1" height="1" fill="#a0a0a0"/><g transform="translate(60,170)"><path d="M0.5,10.5 V1.5 Q0.5,0.5 1.5,0.5 H5 L6.5,2.5 H13.5 Q14.5,2.5 14.5,3.5 V10.5 Q14.5,11.5 13.5,11.5 H1.5 Q0.5,11.5 0.5,10.5 Z" fill="url(#gc)" stroke="#20a0b0"/></g><rect x="62.5" y="188.5" width="8" height="8" fill="#fff" stroke="#a0a0a0"/><path d="M64,192.5 H69" stroke="#000"/><path d="M66.5,190 V195" stroke="#000"/><rect x="72" y="192" width="1" height="1" fill="#a0a0a0"/><rect x="74" y="192" width="1" height="1" fill="#a0a0a0"/><rect x="76" y="192" width="1" height="1" fill="#a0a0a0"/><g transform="translate(79,186)"><path d="M0.5,10.5 V1.5 Q0.5,0.5 1.5,0.5 H5 L6.5,2.5 H13.5 Q14.5,2.5 14.5,3.5 V10.5 Q14.5,11.5 13.5,11.5 H1.5 Q0.5,11.5 0.5,10.5 Z" fill="url(#gy)" stroke="#c89818"/></g><rect x="62.5" y="204.5" width="8" height="8" fill="#fff" stroke="#a0a0a0"/><path d="M64,208.5 H69" stroke="#000"/><path d="M66.5,206 V211" stroke="#000"/><rect x="72" y="208" width="1" height="1" fill="#a0a0a0"/><rect x="74" y="208" width="1" height="1" fill="#a0a0a0"/><rect x="76" y="208" width="1" height="1" fill="#a0a0a0"/><g transform="translate(79,202)"><path d="M0.5,10.5 V1.5 Q0.5,0.5 1.5,0.5 H5 L6.5,2.5 H13.5 Q14.5,2.5 14.5,3.5 V10.5 Q14.5,11.5 13.5,11.5 H1.5 Q0.5,11.5 0.5,10.5 Z" fill="url(#gy)" stroke="#c89818"/></g><rect x="62.5" y="220.5" width="8" height="8" fill="#fff" stroke="#a0a0a0"/><path d="M64,224.5 H69" stroke="#000"/><path d="M66.5,222 V227" stroke="#000"/><rect x="72" y="224" width="1" height="1" fill="#a0a0a0"/><rect x="74" y="224" width="1" height="1" fill="#a0a0a0"/><rect x="76" y="224" width="1" height="1" fill="#a0a0a0"/><g transform="translate(79,218)"><path d="M0.5,10.5 V1.5 Q0.5,0.5 1.5,0.5 H5 L6.5,2.5 H13.5 Q14.5,2.5 14.5,3.5 V10.5 Q14.5,11.5 13.5,11.5 H1.5 Q0.5,11.5 0.5,10.5 Z" fill="url(#gy)" stroke="#c89818"/></g><rect x="62.5" y="236.5" width="8" height="8" fill="#fff" stroke="#a0a0a0"/><path d="M64,240.5 H69" stroke="#000"/><path d="M66.5,238 V243" stroke="#000"/><rect x="72" y="240" width="1" height="1" fill="#a0a0a0"/><rect x="74" y="240" width="1" height="1" fill="#a0a0a0"/><rect x="76" y="240" width="1" height="1" fill="#a0a0a0"/><g transform="translate(79,234)"><path d="M0.5,10.5 V1.5 Q0.5,0.5 1.5,0.5 H5 L6.5,2.5 H13.5 Q14.5,2.5 14.5,3.5 V10.5 Q14.5,11.5 13.5,11.5 H1.5 Q0.5,11.5 0.5,10.5 Z" fill="url(#gy)" stroke="#c89818"/></g><rect x="62.5" y="252.5" width="8" height="8" fill="#fff" stroke="#a0a0a0"/><path d="M64,256.5 H69" stroke="#000"/><path d="M66.5,254 V259" stroke="#000"/><rect x="72" y="256" width="1" height="1" fill="#a0a0a0"/><rect x="74" y="256" width="1" height="1" fill="#a0a0a0"/><rect x="76" y="256" width="1" height="1" fill="#a0a0a0"/><g transform="translate(79,250)"><path d="M0.5,10.5 V1.5 Q0.5,0.5 1.5,0.5 H5 L6.5,2.5 H13.5 Q14.5,2.5 14.5,3.5 V10.5 Q14.5,11.5 13.5,11.5 H1.5 Q0.5,11.5 0.5,10.5 Z" fill="url(#gy)" stroke="#c89818"/></g><rect x="62.5" y="268.5" width="8" height="8" fill="#fff" stroke="#a0a0a0"/><path d="M64,272.5 H69" stroke="#000"/><path d="M66.5,270 V275" stroke="#000"/><rect x="72" y="272" width="1" height="1" fill="#a0a0a0"/><rect x="74" y="272" width="1" height="1" fill="#a0a0a0"/><rect x="76" y="272" width="1" height="1" fill="#a0a0a0"/><g transform="translate(79,266)"><path d="M0.5,10.5 V1.5 Q0.5,0.5 1.5,0.5 H5 L6.5,2.5 H13.5 Q14.5,2.5 14.5,3.5 V10.5 Q14.5,11.5 13.5,11.5 H1.5 Q0.5,11.5 0.5,10.5 Z" fill="url(#gy)" stroke="#c89818"/></g><rect x="62.5" y="284.5" width="8" height="8" fill="#fff" stroke="#a0a0a0"/><path d="M64,288.5 H69" stroke="#000"/><rect x="72" y="288" width="1" height="1" fill="#a0a0a0"/><rect x="74" y="288" width="1" height="1" fill="#a0a0a0"/><rect x="76" y="288" width="1" height="1" fill="#a0a0a0"/><g transform="translate(79,282)"><path d="M0.5,10.5 V1.5 Q0.5,0.5 1.5,0.5 H5 L6.5,2.5 H13.5 Q14.5,2.5 14.5,3.5 V10.5 Q14.5,11.5 13.5,11.5 H1.5 Q0.5,11.5 0.5,10.5 Z" fill="url(#gy)" stroke="#c89818"/></g><rect x="88" y="304" width="1" height="1" fill="#a0a0a0"/><rect x="90" y="304" width="1" height="1" fill="#a0a0a0"/><rect x="92" y="304" width="1" height="1" fill="#a0a0a0"/><rect x="94" y="304" width="1" height="1" fill="#a0a0a0"/><rect x="96" y="304" width="1" height="1" fill="#a0a0a0"/><g transform="translate(99,297)"><path d="M0.5,0.5 H8.5 L12.5,4.5 V13.5 H0.5 Z" fill="url(#gd)" stroke="#8090c0"/><path d="M8.5,0.5 V4.5 H12.5" fill="#fff" stroke="#8090c0"/><rect x="2" y="7" width="9" height="5" fill="#c0cae8"/></g><rect x="62.5" y="316.5" width="8" height="8" fill="#fff" stroke="#a0a0a0"/><path d="M64,320.5 H69" stroke="#000"/><path d="M66.5,318 V323" stroke="#000"/><rect x="72" y="320" width="1" height="1" fill="#a0a0a0"/><rect x="74" y="320" width="1" height="1" fill="#a0a0a0"/><rect x="76" y="320" width="1" height="1" fill="#a0a0a0"/><g transform="translate(79,314)"><path d="M0.5,10.5 V1.5 Q0.5,0.5 1.5,0.5 H5 L6.5,2.5 H13.5 Q14.5,2.5 14.5,3.5 V10.5 Q14.5,11.5 13.5,11.5 H1.5 Q0.5,11.5 0.5,10.5 Z" fill="url(#gy)" stroke="#c89818"/></g><rect x="62.5" y="332.5" width="8" height="8" fill="#fff" stroke="#a0a0a0"/><path d="M64,336.5 H69" stroke="#000"/><path d="M66.5,334 V339" stroke="#000"/><rect x="72" y="336" width="1" height="1" fill="#a0a0a0"/><rect x="74" y="336" width="1" height="1" fill="#a0a0a0"/><rect x="76" y="336" width="1" height="1" fill="#a0a0a0"/><g transform="translate(79,330)"><path d="M0.5,10.5 V1.5 Q0.5,0.5 1.5,0.5 H5 L6.5,2.5 H13.5 Q14.5,2.5 14.5,3.5 V10.5 Q14.5,11.5 13.5,11.5 H1.5 Q0.5,11.5 0.5,10.5 Z" fill="url(#gy)" stroke="#c89818"/></g><rect x="62.5" y="348.5" width="8" height="8" fill="#fff" stroke="#a0a0a0"/><path d="M64,352.5 H69" stroke="#000"/><path d="M66.5,350 V355" stroke="#000"/><rect x="72" y="352" width="1" height="1" fill="#a0a0a0"/><rect x="74" y="352" width="1" height="1" fill="#a0a0a0"/><rect x="76" y="352" width="1" height="1" fill="#a0a0a0"/><g transform="translate(79,346)"><path d="M0.5,10.5 V1.5 Q0.5,0.5 1.5,0.5 H5 L6.5,2.5 H13.5 Q14.5,2.5 14.5,3.5 V10.5 Q14.5,11.5 13.5,11.5 H1.5 Q0.5,11.5 0.5,10.5 Z" fill="url(#gy)" stroke="#c89818"/></g><rect x="62.5" y="364.5" width="8" height="8" fill="#fff" stroke="#a0a0a0"/><path d="M64,368.5 H69" stroke="#000"/><path d="M66.5,366 V371" stroke="#000"/><rect x="72" y="368" width="1" height="1" fill="#a0a0a0"/><rect x="74" y="368" width="1" height="1" fill="#a0a0a0"/><rect x="76" y="368" width="1" height="1" fill="#a0a0a0"/><g transform="translate(79,362)"><path d="M0.5,10.5 V1.5 Q0.5,0.5 1.5,0.5 H5 L6.5,2.5 H13.5 Q14.5,2.5 14.5,3.5 V10.5 Q14.5,11.5 13.5,11.5 H1.5 Q0.5,11.5 0.5,10.5 Z" fill="url(#gy)" stroke="#c89818"/></g><rect x="62.5" y="380.5" width="8" height="8" fill="#fff" stroke="#a0a0a0"/><path d="M64,384.5 H69" stroke="#000"/><path d="M66.5,382 V387" stroke="#000"/><rect x="72" y="384" width="1" height="1" fill="#a0a0a0"/><rect x="74" y="384" width="1" height="1" fill="#a0a0a0"/><rect x="76" y="384" width="1" height="1" fill="#a0a0a0"/><g transform="translate(79,378)"><path d="M0.5,10.5 V1.5 Q0.5,0.5 1.5,0.5 H5 L6.5,2.5 H13.5 Q14.5,2.5 14.5,3.5 V10.5 Q14.5,11.5 13.5,11.5 H1.5 Q0.5,11.5 0.5,10.5 Z" fill="url(#gy)" stroke="#c89818"/></g><rect x="62.5" y="396.5" width="8" height="8" fill="#fff" stroke="#a0a0a0"/><path d="M64,400.5 H69" stroke="#000"/><path d="M66.5,398 V403" stroke="#000"/><rect x="72" y="400" width="1" height="1" fill="#a0a0a0"/><rect x="74" y="400" width="1" height="1" fill="#a0a0a0"/><rect x="76" y="400" width="1" height="1" fill="#a0a0a0"/><g transform="translate(79,394)"><path d="M0.5,10.5 V1.5 Q0.5,0.5 1.5,0.5 H5 L6.5,2.5 H13.5 Q14.5,2.5 14.5,3.5 V10.5 Q14.5,11.5 13.5,11.5 H1.5 Q0.5,11.5 0.5,10.5 Z" fill="url(#gy)" stroke="#c89818"/></g><rect x="62.5" y="412.5" width="8" height="8" fill="#fff" stroke="#a0a0a0"/><path d="M64,416.5 H69" stroke="#000"/><path d="M66.5,414 V419" stroke="#000"/><rect x="72" y="416" width="1" height="1" fill="#a0a0a0"/><rect x="74" y="416" width="1" height="1" fill="#a0a0a0"/><rect x="76" y="416" width="1" height="1" fill="#a0a0a0"/><g transform="translate(79,410)"><path d="M0.5,10.5 V1.5 Q0.5,0.5 1.5,0.5 H5 L6.5,2.5 H13.5 Q14.5,2.5 14.5,3.5 V10.5 Q14.5,11.5 13.5,11.5 H1.5 Q0.5,11.5 0.5,10.5 Z" fill="url(#gy)" stroke="#c89818"/></g><rect x="62.5" y="428.5" width="8" height="8" fill="#fff" stroke="#a0a0a0"/><path d="M64,432.5 H69" stroke="#000"/><path d="M66.5,430 V435" stroke="#000"/><rect x="72" y="432" width="1" height="1" fill="#a0a0a0"/><rect x="74" y="432" width="1" height="1" fill="#a0a0a0"/><rect x="76" y="432" width="1" height="1" fill="#a0a0a0"/><g transform="translate(79,426)"><path d="M0.5,10.5 V1.5 Q0.5,0.5 1.5,0.5 H5 L6.5,2.5 H13.5 Q14.5,2.5 14.5,3.5 V10.5 Q14.5,11.5 13.5,11.5 H1.5 Q0.5,11.5 0.5,10.5 Z" fill="url(#gy)" stroke="#c89818"/></g><rect x="62.5" y="444.5" width="8" height="8" fill="#fff" stroke="#a0a0a0"/><path d="M64,448.5 H69" stroke="#000"/><path d="M66.5,446 V451" stroke="#000"/><rect x="72" y="448" width="1" height="1" fill="#a0a0a0"/><rect x="74" y="448" width="1" height="1" fill="#a0a0a0"/><rect x="76" y="448" width="1" height="1" fill="#a0a0a0"/><g transform="translate(79,442)"><path d="M0.5,10.5 V1.5 Q0.5,0.5 1.5,0.5 H5 L6.5,2.5 H13.5 Q14.5,2.5 14.5,3.5 V10.5 Q14.5,11.5 13.5,11.5 H1.5 Q0.5,11.5 0.5,10.5 Z" fill="url(#gy)" stroke="#c89818"/></g><rect x="43.5" y="460.5" width="8" height="8" fill="#fff" stroke="#a0a0a0"/><path d="M45,464.5 H50" stroke="#000"/><path d="M47.5,462 V467" stroke="#000"/><rect x="53" y="464" width="1" height="1" fill="#a0a0a0"/><rect x="55" y="464" width="1" height="1" fill="#a0a0a0"/><rect x="57" y="464" width="1" height="1" fill="#a0a0a0"/><g transform="translate(60,458)"><path d="M0.5,10.5 V1.5 Q0.5,0.5 1.5,0.5 H5 L6.5,2.5 H13.5 Q14.5,2.5 14.5,3.5 V10.5 Q14.5,11.5 13.5,11.5 H1.5 Q0.5,11.5 0.5,10.5 Z" fill="url(#gc)" stroke="#20a0b0"/></g><rect x="43.5" y="476.5" width="8" height="8" fill="#fff" stroke="#a0a0a0"/><path d="M45,480.5 H50" stroke="#000"/><path d="M47.5,478 V483" stroke="#000"/><rect x="53" y="480" width="1" height="1" fill="#a0a0a0"/><rect x="55" y="480" width="1" height="1" fill="#a0a0a0"/><rect x="57" y="480" width="1" height="1" fill="#a0a0a0"/><g transform="translate(60,474)"><path d="M0.5,10.5 V1.5 Q0.5,0.5 1.5,0.5 H5 L6.5,2.5 H13.5 Q14.5,2.5 14.5,3.5 V10.5 Q14.5,11.5 13.5,11.5 H1.5 Q0.5,11.5 0.5,10.5 Z" fill="url(#gc)" stroke="#20a0b0"/></g><rect x="43.5" y="492.5" width="8" height="8" fill="#fff" stroke="#a0a0a0"/><path d="M45,496.5 H50" stroke="#000"/><path d="M47.5,494 V499" stroke="#000"/><rect x="53" y="496" width="1" height="1" fill="#a0a0a0"/><rect x="55" y="496" width="1" height="1" fill="#a0a0a0"/><rect x="57" y="496" width="1" height="1" fill="#a0a0a0"/><g transform="translate(60,490)"><path d="M0.5,10.5 V1.5 Q0.5,0.5 1.5,0.5 H5 L6.5,2.5 H13.5 Q14.5,2.5 14.5,3.5 V10.5 Q14.5,11.5 13.5,11.5 H1.5 Q0.5,11.5 0.5,10.5 Z" fill="url(#gc)" stroke="#20a0b0"/></g><rect x="43.5" y="508.5" width="8" height="8" fill="#fff" stroke="#a0a0a0"/><path d="M45,512.5 H50" stroke="#000"/><path d="M47.5,510 V515" stroke="#000"/><rect x="53" y="512" width="1" height="1" fill="#a0a0a0"/><rect x="55" y="512" width="1" height="1" fill="#a0a0a0"/><rect x="57" y="512" width="1" height="1" fill="#a0a0a0"/><g transform="translate(60,506)"><path d="M0.5,10.5 V1.5 Q0.5,0.5 1.5,0.5 H5 L6.5,2.5 H13.5 Q14.5,2.5 14.5,3.5 V10.5 Q14.5,11.5 13.5,11.5 H1.5 Q0.5,11.5 0.5,10.5 Z" fill="url(#gc)" stroke="#20a0b0"/></g><rect x="43.5" y="524.5" width="8" height="8" fill="#fff" stroke="#a0a0a0"/><path d="M45,528.5 H50" stroke="#000"/><path d="M47.5,526 V531" stroke="#000"/><rect x="53" y="528" width="1" height="1" fill="#a0a0a0"/><rect x="55" y="528" width="1" height="1" fill="#a0a0a0"/><rect x="57" y="528" width="1" height="1" fill="#a0a0a0"/><g transform="translate(60,522)"><path d="M0.5,10.5 V1.5 Q0.5,0.5 1.5,0.5 H5 L6.5,2.5 H13.5 Q14.5,2.5 14.5,3.5 V10.5 Q14.5,11.5 13.5,11.5 H1.5 Q0.5,11.5 0.5,10.5 Z" fill="url(#gc)" stroke="#20a0b0"/></g><rect x="43.5" y="540.5" width="8" height="8" fill="#fff" stroke="#a0a0a0"/><path d="M45,544.5 H50" stroke="#000"/><path d="M47.5,542 V547" stroke="#000"/><rect x="53" y="544" width="1" height="1" fill="#a0a0a0"/><rect x="55" y="544" width="1" height="1" fill="#a0a0a0"/><rect x="57" y="544" width="1" height="1" fill="#a0a0a0"/><g transform="translate(60,538)"><path d="M0.5,10.5 V1.5 Q0.5,0.5 1.5,0.5 H5 L6.5,2.5 H13.5 Q14.5,2.5 14.5,3.5 V10.5 Q14.5,11.5 13.5,11.5 H1.5 Q0.5,11.5 0.5,10.5 Z" fill="url(#gc)" stroke="#20a0b0"/></g><rect x="43.5" y="556.5" width="8" height="8" fill="#fff" stroke="#a0a0a0"/><path d="M45,560.5 H50" stroke="#000"/><path d="M47.5,558 V563" stroke="#000"/><rect x="53" y="560" width="1" height="1" fill="#a0a0a0"/><rect x="55" y="560" width="1" height="1" fill="#a0a0a0"/><rect x="57" y="560" width="1" height="1" fill="#a0a0a0"/><g transform="translate(60,554)"><path d="M0.5,10.5 V1.5 Q0.5,0.5 1.5,0.5 H5 L6.5,2.5 H13.5 Q14.5,2.5 14.5,3.5 V10.5 Q14.5,11.5 13.5,11.5 H1.5 Q0.5,11.5 0.5,10.5 Z" fill="url(#gc)" stroke="#20a0b0"/></g></svg>
<svg width="813" height="600"><defs><pattern id="spl" x="276" y="52" width="4" height="4" patternUnits="userSpaceOnUse">
<rect width="4" height="4" fill="#c4d8f4"/><rect x="0" y="0" width="1" height="1" fill="#8c96a4"/><rect x="2" y="2" width="1" height="1" fill="#8c96a4"/></pattern></defs>
<rect x="275" y="52" width="6" height="521" fill="url(#spl)"/>
<rect x="275" y="302" width="6" height="22" fill="#c4d8f4"/>
<path d="M276,304 V312 L281,308 Z" fill="#808080"/><path d="M276.5,304 V312" stroke="#000"/>
<path d="M281,315 V323 L276,319 Z" fill="#808080"/><path d="M281,315 L276,319" stroke="#000"/>
</svg>
<div class="a" style="left:281px;top:72px;width:507px;height:483px;background:#fff"></div>
<div class="a" style="left:281px;top:72px;width:47px;height:483px;background:linear-gradient(90deg,#b4bac6 0,#bcc2cc 10%,#d4d8de 45%,#eceef2 75%,#f8f8fa 88%,#fff 92%)"></div>
<div class="a" style="left:328px;top:72px;width:1px;height:483px;background:#8a8a8a"></div>
<div class="a" style="left:281px;top:72px;width:507px;height:483px;overflow:hidden">
<div class="ln" style="left:17px;top:2px;font-size:12px;letter-spacing:0.8px">20</div>
<div class="ln cm" style="left:64px;top:2px">// Read Setup</div>
<div class="ln" style="left:17px;top:19px;font-size:12px;letter-spacing:0.8px">21</div>
<div class="ln cd" style="left:64px;top:19px">// -----------</div>
<div class="ln" style="left:17px;top:36px;font-size:12px;letter-spacing:0.8px">22</div>
<div class="ln" style="left:64px;top:36px"><span class="kw">procedure</span> TForm1<span class="sy">.</span>ReadSetup<span class="sy">;</span></div>
<div class="ln" style="left:17px;top:53px;font-size:12px;letter-spacing:0.8px">23</div>
<div class="ln" style="left:64px;top:53px"><span class="kw">begin</span></div>
<div class="ln" style="left:17px;top:70px;font-size:12px;letter-spacing:0.8px">24</div>
<div class="ln" style="left:64px;top:70px">  MyIni <span class="sy">:=</span> TIniFile<span class="sy">.</span>Create<span class="sy">(</span>ChangeFileExt</div>
<div class="ln" style="left:17px;top:87px;font-size:12px;letter-spacing:0.8px">25</div>
<div class="ln" style="left:64px;top:87px">  <span class="kw">try</span></div>
<div class="ln" style="left:17px;top:104px;font-size:12px;letter-spacing:0.8px">26</div>
<div class="ln" style="left:64px;top:104px">    Edit1<span class="sy">.</span>Text <span class="sy">:=</span> MyIni<span class="sy">.</span>ReadString<span class="sy">(</span><span class="st">'Setup'</span></div>
<div class="ln" style="left:17px;top:121px;font-size:12px;letter-spacing:0.8px">27</div>
<div class="ln" style="left:64px;top:121px">    IntegerVar <span class="sy">:=</span> MyIni<span class="sy">.</span>ReadInteger</div>
<div class="ln" style="left:17px;top:138px;font-size:12px;letter-spacing:0.8px">28</div>
<div class="ln" style="left:64px;top:138px">    BooleanVar <span class="sy">:=</span> MyIni<span class="sy">.</span>ReadBool<span class="sy">(</span><span class="st">'Setup'</span></div>
<div class="ln" style="left:17px;top:155px;font-size:12px;letter-spacing:0.8px">29</div>
<div class="ln" style="left:64px;top:155px">  <span class="kw">finally</span></div>
<div class="ln" style="left:17px;top:172px;font-size:12px;letter-spacing:0.8px">30</div>
<div class="ln" style="left:64px;top:172px">    MyIni<span class="sy">.</span>Free<span class="sy">;</span></div>
<div class="ln" style="left:17px;top:189px;font-size:12px;letter-spacing:0.8px">31</div>
<div class="ln" style="left:64px;top:189px">  <span class="kw">end</span><span class="sy">;</span></div>
<div class="ln" style="left:17px;top:206px;font-size:12px;letter-spacing:0.8px">32</div>
<div class="ln" style="left:64px;top:206px"><span class="kw">end</span><span class="sy">;</span></div>
<div class="ln" style="left:17px;top:223px;font-size:12px;letter-spacing:0.8px">33</div>
<div class="ln" style="left:64px;top:223px"></div>
<div class="ln" style="left:17px;top:240px;font-size:12px;letter-spacing:0.8px">34</div>
<div class="ln cd" style="left:64px;top:240px">// -----------</div>
<div class="ln" style="left:17px;top:257px;font-size:12px;letter-spacing:0.8px">35</div>
<div class="ln cm" style="left:64px;top:257px">// Write Setup</div>
<div class="ln" style="left:17px;top:274px;font-size:12px;letter-spacing:0.8px">36</div>
<div class="ln cd" style="left:64px;top:274px">// -----------</div>
<div class="ln" style="left:17px;top:291px;font-size:12px;letter-spacing:0.8px">37</div>
<div class="ln" style="left:64px;top:291px"><span class="kw">procedure</span> TForm1<span class="sy">.</span>WriteSetup<span class="sy">;</span></div>
<div class="ln" style="left:17px;top:308px;font-size:12px;letter-spacing:0.8px">38</div>
<div class="ln" style="left:64px;top:308px"><span class="kw">begin</span></div>
<div class="ln" style="left:17px;top:325px;font-size:12px;letter-spacing:0.8px">39</div>
<div class="ln" style="left:64px;top:325px">  MyIni <span class="sy">:=</span> TIniFile<span class="sy">.</span>Create<span class="sy">(</span>ChangeFileExt</div>
<div class="ln" style="left:17px;top:342px;font-size:12px;letter-spacing:0.8px">40</div>
<div class="ln" style="left:64px;top:342px">  <span class="kw">try</span></div>
<div class="ln" style="left:17px;top:359px;font-size:12px;letter-spacing:0.8px">41</div>
<div class="ln" style="left:64px;top:359px">    MyIni<span class="sy">.</span>WriteString<span class="sy">(</span><span class="st">'Setup'</span><span class="sy">,</span> <span class="st">'Edit1'</span></div>
<div class="ln" style="left:17px;top:376px;font-size:12px;letter-spacing:0.8px">42</div>
<div class="ln" style="left:64px;top:376px">    MyIni<span class="sy">.</span>WriteInteger<span class="sy">(</span><span class="st">'Setup'</span><span class="sy">,</span> <span class="st">'IntegerVar'</span></div>
<div class="ln" style="left:17px;top:393px;font-size:12px;letter-spacing:0.8px">43</div>
<div class="ln" style="left:64px;top:393px">    MyIni<span class="sy">.</span>WriteBool<span class="sy">(</span><span class="st">'Setup'</span><span class="sy">,</span> <span class="st">'BooleanVar'</span></div>
<div class="ln" style="left:17px;top:410px;font-size:12px;letter-spacing:0.8px">44</div>
<div class="ln" style="left:64px;top:410px">  <span class="kw">finally</span></div>
<div class="ln" style="left:17px;top:427px;font-size:12px;letter-spacing:0.8px">45</div>
<div class="ln" style="left:64px;top:427px">    MyIni<span class="sy">.</span>Free<span class="sy">;</span></div>
<div class="ln" style="left:17px;top:444px;font-size:12px;letter-spacing:0.8px">46</div>
<div class="ln" style="left:64px;top:444px">  <span class="kw">end</span><span class="sy">;</span></div>
<div class="ln" style="left:17px;top:461px;font-size:12px;letter-spacing:0.8px">47</div>
<div class="ln" style="left:64px;top:461px"><span class="kw">end</span><span class="sy">;</span></div>
</div>
<svg width="813" height="600"><rect x="331.5" y="111.5" width="8" height="8" fill="#fff" stroke="#808080"/><path d="M333.5,115.5 H337.5" stroke="#808080"/><path d="M335.5,120 V294.5 H339" stroke="#808080" fill="none"/><rect x="331.5" y="366.5" width="8" height="8" fill="#fff" stroke="#808080"/><path d="M333.5,370.5 H337.5" stroke="#808080"/><path d="M335.5,375 V549.5 H339" stroke="#808080" fill="none"/></svg>
<svg width="813" height="600"><defs><pattern id="dith" width="2" height="2" patternUnits="userSpaceOnUse"><rect width="2" height="2" fill="#fafafa"/><rect width="1" height="1" fill="#e2e2e6"/><rect x="1" y="1" width="1" height="1" fill="#e2e2e6"/></pattern></defs><rect x="789" y="72" width="15" height="482" fill="url(#dith)"/><rect x="787" y="72" width="1" height="483" fill="#e2dcd0"/><rect x="788" y="72" width="1" height="483" fill="#fff"/><rect x="282" y="555" width="505" height="17" fill="url(#dith)"/><rect x="789" y="72" width="15" height="17" fill="#ebe9ee"/><rect x="789" y="72" width="14" height="1" fill="#fff"/><rect x="789" y="72" width="1" height="16" fill="#fff"/><rect x="802" y="73" width="1" height="15" fill="#a4a4a8"/><rect x="790" y="87" width="13" height="1" fill="#a4a4a8"/><rect x="803" y="72" width="1" height="17" fill="#88888c"/><rect x="789" y="88" width="15" height="1" fill="#88888c"/><path d="M792,82.5 L795.75,78 L799.5,82.5 Z" fill="#000"/><rect x="789" y="271" width="15" height="267" fill="#ebe9ee"/><rect x="789" y="271" width="14" height="1" fill="#fff"/><rect x="789" y="271" width="1" height="266" fill="#fff"/><rect x="802" y="272" width="1" height="265" fill="#a4a4a8"/><rect x="790" y="536" width="13" height="1" fill="#a4a4a8"/><rect x="803" y="271" width="1" height="267" fill="#88888c"/><rect x="789" y="537" width="15" height="1" fill="#88888c"/><rect x="789" y="538" width="15" height="16" fill="#ebe9ee"/><rect x="789" y="538" width="14" height="1" fill="#fff"/><rect x="789" y="538" width="1" height="15" fill="#fff"/><rect x="802" y="539" width="1" height="14" fill="#a4a4a8"/><rect x="790" y="552" width="13" height="1" fill="#a4a4a8"/><rect x="803" y="538" width="1" height="16" fill="#88888c"/><rect x="789" y="553" width="15" height="1" fill="#88888c"/><path d="M792,545 L799.5,545 L795.75,549.5 Z" fill="#000"/><rect x="282" y="555" width="17" height="17" fill="#ebe9ee"/><rect x="282" y="555" width="16" height="1" fill="#fff"/><rect x="282" y="555" width="1" height="16" fill="#fff"/><rect x="297" y="556" width="1" height="15" fill="#a4a4a8"/><rect x="283" y="570" width="15" height="1" fill="#a4a4a8"/><rect x="298" y="555" width="1" height="17" fill="#88888c"/><rect x="282" y="571" width="17" height="1" fill="#88888c"/><path d="M291.5,559.5 L291.5,567 L287.5,563.25 Z" fill="#000"/><rect x="299" y="555" width="342" height="17" fill="#ebe9ee"/><rect x="299" y="555" width="341" height="1" fill="#fff"/><rect x="299" y="555" width="1" height="16" fill="#fff"/><rect x="639" y="556" width="1" height="15" fill="#a4a4a8"/><rect x="300" y="570" width="340" height="1" fill="#a4a4a8"/><rect x="640" y="555" width="1" height="17" fill="#88888c"/><rect x="299" y="571" width="342" height="1" fill="#88888c"/><rect x="787" y="555" width="17" height="17" fill="#ebe9ee"/><rect x="787" y="555" width="16" height="1" fill="#fff"/><rect x="787" y="555" width="1" height="16" fill="#fff"/><rect x="802" y="556" width="1" height="15" fill="#a4a4a8"/><rect x="788" y="570" width="15" height="1" fill="#a4a4a8"/><rect x="803" y="555" width="1" height="17" fill="#88888c"/><rect x="787" y="571" width="17" height="1" fill="#88888c"/><path d="M793,559.5 L793,567 L797,563.25 Z" fill="#000"/><rect x="281" y="554" width="507" height="1" fill="#e6e0d4"/></svg>
<div class="a" style="left:729px;top:53px;width:59px;height:17px;background:#e6e6ec"></div>
<svg width="813" height="600"><g transform="translate(735,54)">
<rect x="0.5" y="0.5" width="15" height="11" fill="#fff" stroke="#84847c"/>
<rect x="9" y="1" width="6" height="10" fill="#c4c4c0"/>
<path d="M2,3.5 H7.5 M2,5.5 H7.5 M2,7.5 H7.5 M2,9.5 H7.5" stroke="#88b8e8"/>
<path d="M10,3.5 H14 M10,5.5 H14 M10,7.5 H14" stroke="#f4f4f4"/>
<rect x="0" y="11" width="16" height="3" fill="#6c6c6c"/><rect x="0" y="11" width="16" height="1" fill="#a8a8a8"/>
<path d="M0,14.5 H16" stroke="#000" stroke-dasharray="1 1"/>
</g></svg>
<div class="t" style="left:755px;top:55px;font-size:12px;line-height:15px;letter-spacing:-0.4px">Menu</div>
<div class="a" style="left:629px;top:69px;width:160px;height:436px;background:#f5f5f5;border:1px solid #8c8c8c"></div>
<div class="a" style="left:630px;top:70px;width:25px;height:434px;background:#e5e9ea;border-right:1px solid #c8cacc"></div>
<div class="a" style="left:631px;top:71px;width:156px;height:24px;border:1px solid #ecc878;background:linear-gradient(#fff6dc 0,#fff0c8 45%,#fedd88 50%,#fdd070 100%)"></div>
<div class="mt" style="top:76px"><u>S</u>earch Tips...</div>
<div class="sep" style="top:96px"></div>
<div class="mt" style="top:103px"><u>N</u>ew Language</div>
<div class="mt" style="top:127px">N<u>e</u>w Category</div>
<div class="mt" style="top:151px">Ne<u>w</u> Tip</div>
<div class="sep" style="top:171px"></div>
<div class="mt" style="top:178px"><u>A</u>dd Tip From File</div>
<div class="sep" style="top:198px"></div>
<div class="mt dis" style="top:205px">Sa<u>v</u>e Changes</div>
<div class="mt" style="top:229px">Save as <u>R</u>TF...</div>
<div class="mt" style="top:253px">Save as <u>H</u>TML...</div>
<div class="sep" style="top:273px"></div>
<div class="mt" style="top:280px"><u>F</u>ind Text...</div>
<div class="mt" style="top:304px">Re<u>p</u>lace Text...</div>
<div class="sep" style="top:324px"></div>
<div class="mt dis" style="top:331px"><u>U</u>ndo</div>
<div class="mt dis" style="top:355px">Re<u>d</u>o</div>
<div class="mt dis" style="top:379px">Und<u>o</u> (lost) Changes</div>
<div class="sep" style="top:399px"></div>
<div class="mt" style="top:406px">Rena<u>m</u>e / Properties</div>
<div class="mt" style="top:430px">De<u>l</u>ete Tip</div>
<div class="sep" style="top:450px"></div>
<div class="mt" style="top:457px">Show <u>T</u>oolBar</div>
<div class="sep" style="top:477px"></div>
<div class="mt" style="top:484px">E<u>x</u>it</div>
<!-- menu end 503 -->
<div class="a" style="left:632px;top:453px;width:22px;height:22px;background:#ffc080;border:1px solid #0a2080"></div>
<svg width="813" height="600"><g transform="translate(639,460)"><path d="M0,4 L2.5,7 L7.5,0.5" stroke="#000" stroke-width="2" fill="none"/></g></svg>
<svg width="813" height="600"><defs>
<linearGradient id="gc" x1="0" y1="0" x2="0.9" y2="1"><stop offset="0" stop-color="#e8fdff"/><stop offset="0.45" stop-color="#98eaf6"/><stop offset="1" stop-color="#34c8e0"/></linearGradient>
<linearGradient id="gy" x1="0" y1="0" x2="0.9" y2="1"><stop offset="0" stop-color="#fffef0"/><stop offset="0.45" stop-color="#fcec98"/><stop offset="1" stop-color="#f0c428"/></linearGradient>
<linearGradient id="gd" x1="0" y1="0" x2="1" y2="1"><stop offset="0" stop-color="#ffffff"/><stop offset="1" stop-color="#aab8e8"/></linearGradient>
<linearGradient id="gs" x1="0" y1="0" x2="1" y2="1"><stop offset="0" stop-color="#e4e4f8"/><stop offset="1" stop-color="#9c9cd4"/></linearGradient>
<linearGradient id="gdoor" x1="0" y1="0" x2="1" y2="0"><stop offset="0" stop-color="#50c0f0"/><stop offset="1" stop-color="#0060a8"/></linearGradient>
</defs><rect x="13" y="78" width="1" height="3" fill="#9a9ea6"/><rect x="15" y="78" width="1" height="3" fill="#9a9ea6"/><rect x="17" y="78" width="1" height="3" fill="#9a9ea6"/><rect x="19" y="78" width="1" height="3" fill="#9a9ea6"/><rect x="21" y="78" width="1" height="3" fill="#9a9ea6"/><rect x="23" y="78" width="1" height="3" fill="#9a9ea6"/><rect x="25" y="78" width="1" height="3" fill="#9a9ea6"/><rect x="27" y="78" width="1" height="3" fill="#9a9ea6"/><rect x="29" y="78" width="1" height="3" fill="#9a9ea6"/><rect x="31" y="78" width="1" height="3" fill="#9a9ea6"/><rect x="13" y="113" width="20" height="1" fill="#a0a4a8"/><rect x="14" y="114" width="20" height="1" fill="#fff"/><rect x="13" y="196" width="20" height="1" fill="#a0a4a8"/><rect x="14" y="197" width="20" height="1" fill="#fff"/><rect x="13" y="229" width="20" height="1" fill="#a0a4a8"/><rect x="14" y="230" width="20" height="1" fill="#fff"/><rect x="13" y="311" width="20" height="1" fill="#a0a4a8"/><rect x="14" y="312" width="20" height="1" fill="#fff"/><rect x="13" y="369" width="20" height="1" fill="#a0a4a8"/><rect x="14" y="370" width="20" height="1" fill="#fff"/><rect x="13" y="451" width="20" height="1" fill="#a0a4a8"/><rect x="14" y="452" width="20" height="1" fill="#fff"/><rect x="13" y="509" width="20" height="1" fill="#a0a4a8"/><rect x="14" y="510" width="20" height="1" fill="#fff"/><g transform="translate(16,88)"><path d="M0.5,0.5 H9 L12.5,4 V14.5 H0.5 Z" fill="url(#gs)" stroke="#b4b4e0"/><circle cx="9.5" cy="2.5" r="1.3" fill="#fff" stroke="#505090"/><circle cx="5.8" cy="8" r="2.8" fill="#f0f0fc" stroke="#60609c" stroke-width="1.2"/><path d="M8,10.2 L11.8,14" stroke="#303068" stroke-width="2"/><path d="M11,2 V12" stroke="#fff" stroke-width="1"/></g><g transform="translate(14,122)"><path d="M0.5,11.5 V2.5 Q0.5,1.5 1.5,1.5 H5 L6.5,3.5 H13.5 Q14.5,3.5 14.5,4.5 V11.5 Q14.5,12.5 13.5,12.5 H1.5 Q0.5,12.5 0.5,11.5 Z" fill="url(#gc)" stroke="#1ea0b0"/><circle cx="11.5" cy="3" r="2.9" fill="#ffd828" stroke="#ec5a20" stroke-width="1.3" stroke-dasharray="1.2 0.6"/></g><g transform="translate(14,146)"><path d="M0.5,11.5 V2.5 Q0.5,1.5 1.5,1.5 H5 L6.5,3.5 H13.5 Q14.5,3.5 14.5,4.5 V11.5 Q14.5,12.5 13.5,12.5 H1.5 Q0.5,12.5 0.5,11.5 Z" fill="url(#gy)" stroke="#c89818"/><circle cx="11.5" cy="3" r="2.9" fill="#ffd828" stroke="#ec5a20" stroke-width="1.3" stroke-dasharray="1.2 0.6"/></g><g transform="translate(16,170)"><rect x="0.5" y="0.5" width="11" height="13" fill="#f4f6ff" stroke="#6a78b8"/><rect x="1" y="6" width="10" height="7" fill="#b4c2e6"/><circle cx="9" cy="3" r="2.9" fill="#ffd828" stroke="#ec5a20" stroke-width="1.3" stroke-dasharray="1.2 0.6"/></g><g transform="translate(14,206)"><path d="M0.5,10.5 V1.5 Q0.5,0.5 1.5,0.5 H5 L6.5,2.5 H13.5 Q14.5,2.5 14.5,3.5 V10.5 Q14.5,11.5 13.5,11.5 H1.5 Q0.5,11.5 0.5,10.5 Z" fill="url(#gy)" stroke="#c89818"/><path d="M2,3 Q7,2 9,7 L11,6 L8.5,12.5 L4,8.5 L6.5,8 Q5.5,5 2,5 Z" fill="#48a8e8" stroke="#1a68b8" stroke-width="0.8"/></g><g transform="translate(15,239)"><rect x="0" y="0" width="14" height="14" fill="#a8a8ac"/><rect x="3" y="2" width="1" height="3" fill="#fff"/><rect x="7" y="10" width="1" height="1.5" fill="#fff"/><path d="M14.5,1 V14.5 H1" stroke="#fff" fill="none"/></g><g transform="translate(14,262)"><rect x="0.5" y="0.5" width="15" height="15" fill="#f4f6fc" stroke="#2848b8"/><rect x="2.5" y="2.5" width="11" height="11" fill="#ffffff" stroke="#c8d4f0"/><path d="M3.2,4 L4.2,11.5 L7.8,6 L8.3,11.5 L13.2,4" fill="none" stroke="#2044b4" stroke-width="2.1" stroke-linejoin="bevel"/></g><g transform="translate(14,286)"><defs><linearGradient id="gie" x1="0" y1="0" x2="0" y2="1"><stop offset="0" stop-color="#7cc8f8"/><stop offset="1" stop-color="#1070d8"/></linearGradient></defs><ellipse cx="8" cy="9" rx="8" ry="3.4" transform="rotate(-38 8 9)" fill="none" stroke="#2a90e8" stroke-width="1.2"/><circle cx="8.5" cy="9" r="5.3" fill="url(#gie)"/><ellipse cx="8.7" cy="7.4" rx="2.6" ry="1.3" fill="#fff"/><rect x="8.6" y="9.6" width="6" height="1.6" fill="#fff"/></g><g transform="translate(14,322)"><g transform="scale(1.0)"><path d="M2,0.5 H5 V3 L6,4 V6 L7,7 V11.5 H1 Q0.5,11.5 0.5,11 V8 L1.5,5 V3.5 Z M13,0.5 H10 V3 L9,4 V6 L8,7 V11.5 H14 Q14.5,11.5 14.5,11 V8 L13.5,5 V3.5 Z" fill="#1a5c7c" stroke="#0a3850" stroke-width="0.8"/><rect x="6" y="5" width="3" height="3.5" fill="#1a5c7c"/><path d="M3.5,1.5 V2.5 M11.5,1.5 V2.5 M2.5,7 V10 M12.5,6 V9 M7.5,6 V7.5" stroke="#7cc4ec" stroke-width="1"/></g></g><g transform="translate(14,344)"><g transform="scale(0.68)"><path d="M2,0.5 H5 V3 L6,4 V6 L7,7 V11.5 H1 Q0.5,11.5 0.5,11 V8 L1.5,5 V3.5 Z M13,0.5 H10 V3 L9,4 V6 L8,7 V11.5 H14 Q14.5,11.5 14.5,11 V8 L13.5,5 V3.5 Z" fill="#1a5c7c" stroke="#0a3850" stroke-width="0.8"/><rect x="6" y="5" width="3" height="3.5" fill="#1a5c7c"/><path d="M3.5,1.5 V2.5 M11.5,1.5 V2.5 M2.5,7 V10 M12.5,6 V9 M7.5,6 V7.5" stroke="#7cc4ec" stroke-width="1"/></g><path d="M7.5,6.5 H13 L15.5,9 V15.5 H7.5 Z" fill="#f8e88c" stroke="#203850"/><path d="M13,6.5 V9 H15.5" fill="#fff" stroke="#203850" stroke-width="0.8"/><rect x="8" y="11.5" width="7" height="3.5" fill="#a8d8f4"/><path d="M9,13 H14" stroke="#305070"/><path d="M1.5,10 V13.5 H6 M4.5,12 L6,13.5 L4.5,15" stroke="#505050" stroke-width="1.1" fill="none"/></g><g transform="translate(16,383)"><path d="M0,2 L0,6.5 L4.5,6.5 L3,5 Q5.5,2.5 8,3 Q10.5,3.8 10.5,6.5 L12.5,6.5 Q12.5,1.8 8.5,0.8 Q5,0 2,3 Z" fill="#a4a4a8"/><path d="M10.6,6.6 H12.6" stroke="#fff"/></g><g transform="translate(16,407)"><g transform="translate(12.5,0) scale(-1,1)"><path d="M0,2 L0,6.5 L4.5,6.5 L3,5 Q5.5,2.5 8,3 Q10.5,3.8 10.5,6.5 L12.5,6.5 Q12.5,1.8 8.5,0.8 Q5,0 2,3 Z" fill="#a4a4a8"/></g><path d="M0,6.6 H2" stroke="#fff"/></g><g transform="translate(15,427)"><path d="M3,0.5 H10 L14,4.5 V14 H3 V11 H0.5 V7 H3 Z" fill="#a4a4a8"/><rect x="5" y="3" width="4" height="1.2" fill="#fff"/><path d="M14.5,5 V14.5 H1" stroke="#fff" fill="none"/></g><g transform="translate(14,462)"><rect x="0.5" y="5.5" width="10" height="5" fill="#c8dcf8" stroke="#8ab0e0"/><rect x="2" y="7" width="9" height="3" fill="#1a7cf0"/><path d="M10.5,0.5 H12 Q13,0.5 13,2 V11 Q13,12.5 12,12.5 H10.5 M15.5,0.5 H14 Q13,0.5 13,2 M13,11 Q13,12.5 14,12.5 H15.5" stroke="#202020" fill="none"/></g><g transform="translate(15,485)"><path d="M1.5,14.5 Q2.5,8 14.5,0.5 L15,1.2 Q7,7 4.5,14.5 Q3,16 1.5,14.5 Z" fill="#e02a14"/><path d="M0.5,2.2 Q2.5,0 6,2.5 Q9,5 12.8,12.8 L12,13 Q8.5,7.5 5.5,5 Q3,3.5 0.5,3.5 Z" fill="#e23a20"/><path d="M1,2.5 Q3,1.5 5,3" stroke="#f08060" stroke-width="1.4" fill="none"/></g><g transform="translate(16,518)"><rect x="0.5" y="2.5" width="9" height="11" fill="#fff" stroke="#1890d8"/><path d="M5,3 L12,0 V13 L5,15.5 Z" fill="url(#gdoor)" stroke="#0868b0" stroke-width="0.6"/><circle cx="6.5" cy="9.5" r="0.7" fill="#fff"/></g><g transform="translate(637,75)"><path d="M0.5,0.5 H9 L12.5,4 V14.5 H0.5 Z" fill="url(#gs)" stroke="#b4b4e0"/><circle cx="9.5" cy="2.5" r="1.3" fill="#fff" stroke="#505090"/><circle cx="5.8" cy="8" r="2.8" fill="#f0f0fc" stroke="#60609c" stroke-width="1.2"/><path d="M8,10.2 L11.8,14" stroke="#303068" stroke-width="2"/><path d="M11,2 V12" stroke="#fff" stroke-width="1"/></g><g transform="translate(635,101)"><path d="M0.5,11.5 V2.5 Q0.5,1.5 1.5,1.5 H5 L6.5,3.5 H13.5 Q14.5,3.5 14.5,4.5 V11.5 Q14.5,12.5 13.5,12.5 H1.5 Q0.5,12.5 0.5,11.5 Z" fill="url(#gc)" stroke="#1ea0b0"/><circle cx="11.5" cy="3" r="2.9" fill="#ffd828" stroke="#ec5a20" stroke-width="1.3" stroke-dasharray="1.2 0.6"/></g><g transform="translate(635,126)"><path d="M0.5,11.5 V2.5 Q0.5,1.5 1.5,1.5 H5 L6.5,3.5 H13.5 Q14.5,3.5 14.5,4.5 V11.5 Q14.5,12.5 13.5,12.5 H1.5 Q0.5,12.5 0.5,11.5 Z" fill="url(#gy)" stroke="#c89818"/><circle cx="11.5" cy="3" r="2.9" fill="#ffd828" stroke="#ec5a20" stroke-width="1.3" stroke-dasharray="1.2 0.6"/></g><g transform="translate(637,151)"><rect x="0.5" y="0.5" width="11" height="13" fill="#f4f6ff" stroke="#6a78b8"/><rect x="1" y="6" width="10" height="7" fill="#b4c2e6"/><circle cx="9" cy="3" r="2.9" fill="#ffd828" stroke="#ec5a20" stroke-width="1.3" stroke-dasharray="1.2 0.6"/></g><g transform="translate(635,179)"><path d="M0.5,10.5 V1.5 Q0.5,0.5 1.5,0.5 H5 L6.5,2.5 H13.5 Q14.5,2.5 14.5,3.5 V10.5 Q14.5,11.5 13.5,11.5 H1.5 Q0.5,11.5 0.5,10.5 Z" fill="url(#gy)" stroke="#c89818"/><path d="M2,3 Q7,2 9,7 L11,6 L8.5,12.5 L4,8.5 L6.5,8 Q5.5,5 2,5 Z" fill="#48a8e8" stroke="#1a68b8" stroke-width="0.8"/></g><g transform="translate(636,205)"><rect x="0" y="0" width="14" height="14" fill="#a8a8ac"/><rect x="3" y="2" width="1" height="3" fill="#fff"/><rect x="7" y="10" width="1" height="1.5" fill="#fff"/><path d="M14.5,1 V14.5 H1" stroke="#fff" fill="none"/></g><g transform="translate(635,228)"><rect x="0.5" y="0.5" width="15" height="15" fill="#f4f6fc" stroke="#2848b8"/><rect x="2.5" y="2.5" width="11" height="11" fill="#ffffff" stroke="#c8d4f0"/><path d="M3.2,4 L4.2,11.5 L7.8,6 L8.3,11.5 L13.2,4" fill="none" stroke="#2044b4" stroke-width="2.1" stroke-linejoin="bevel"/></g><g transform="translate(635,251)"><defs><linearGradient id="gie" x1="0" y1="0" x2="0" y2="1"><stop offset="0" stop-color="#7cc8f8"/><stop offset="1" stop-color="#1070d8"/></linearGradient></defs><ellipse cx="8" cy="9" rx="8" ry="3.4" transform="rotate(-38 8 9)" fill="none" stroke="#2a90e8" stroke-width="1.2"/><circle cx="8.5" cy="9" r="5.3" fill="url(#gie)"/><ellipse cx="8.7" cy="7.4" rx="2.6" ry="1.3" fill="#fff"/><rect x="8.6" y="9.6" width="6" height="1.6" fill="#fff"/></g><g transform="translate(635,280)"><g transform="scale(1.0)"><path d="M2,0.5 H5 V3 L6,4 V6 L7,7 V11.5 H1 Q0.5,11.5 0.5,11 V8 L1.5,5 V3.5 Z M13,0.5 H10 V3 L9,4 V6 L8,7 V11.5 H14 Q14.5,11.5 14.5,11 V8 L13.5,5 V3.5 Z" fill="#1a5c7c" stroke="#0a3850" stroke-width="0.8"/><rect x="6" y="5" width="3" height="3.5" fill="#1a5c7c"/><path d="M3.5,1.5 V2.5 M11.5,1.5 V2.5 M2.5,7 V10 M12.5,6 V9 M7.5,6 V7.5" stroke="#7cc4ec" stroke-width="1"/></g></g><g transform="translate(635,302)"><g transform="scale(0.68)"><path d="M2,0.5 H5 V3 L6,4 V6 L7,7 V11.5 H1 Q0.5,11.5 0.5,11 V8 L1.5,5 V3.5 Z M13,0.5 H10 V3 L9,4 V6 L8,7 V11.5 H14 Q14.5,11.5 14.5,11 V8 L13.5,5 V3.5 Z" fill="#1a5c7c" stroke="#0a3850" stroke-width="0.8"/><rect x="6" y="5" width="3" height="3.5" fill="#1a5c7c"/><path d="M3.5,1.5 V2.5 M11.5,1.5 V2.5 M2.5,7 V10 M12.5,6 V9 M7.5,6 V7.5" stroke="#7cc4ec" stroke-width="1"/></g><path d="M7.5,6.5 H13 L15.5,9 V15.5 H7.5 Z" fill="#f8e88c" stroke="#203850"/><path d="M13,6.5 V9 H15.5" fill="#fff" stroke="#203850" stroke-width="0.8"/><rect x="8" y="11.5" width="7" height="3.5" fill="#a8d8f4"/><path d="M9,13 H14" stroke="#305070"/><path d="M1.5,10 V13.5 H6 M4.5,12 L6,13.5 L4.5,15" stroke="#505050" stroke-width="1.1" fill="none"/></g><g transform="translate(637,335)"><path d="M0,2 L0,6.5 L4.5,6.5 L3,5 Q5.5,2.5 8,3 Q10.5,3.8 10.5,6.5 L12.5,6.5 Q12.5,1.8 8.5,0.8 Q5,0 2,3 Z" fill="#a4a4a8"/><path d="M10.6,6.6 H12.6" stroke="#fff"/></g><g transform="translate(637,359)"><g transform="translate(12.5,0) scale(-1,1)"><path d="M0,2 L0,6.5 L4.5,6.5 L3,5 Q5.5,2.5 8,3 Q10.5,3.8 10.5,6.5 L12.5,6.5 Q12.5,1.8 8.5,0.8 Q5,0 2,3 Z" fill="#a4a4a8"/></g><path d="M0,6.6 H2" stroke="#fff"/></g><g transform="translate(636,379)"><path d="M3,0.5 H10 L14,4.5 V14 H3 V11 H0.5 V7 H3 Z" fill="#a4a4a8"/><rect x="5" y="3" width="4" height="1.2" fill="#fff"/><path d="M14.5,5 V14.5 H1" stroke="#fff" fill="none"/></g><g transform="translate(635,406)"><rect x="0.5" y="5.5" width="10" height="5" fill="#c8dcf8" stroke="#8ab0e0"/><rect x="2" y="7" width="9" height="3" fill="#1a7cf0"/><path d="M10.5,0.5 H12 Q13,0.5 13,2 V11 Q13,12.5 12,12.5 H10.5 M15.5,0.5 H14 Q13,0.5 13,2 M13,11 Q13,12.5 14,12.5 H15.5" stroke="#202020" fill="none"/></g><g transform="translate(635,429)"><path d="M1.5,14.5 Q2.5,8 14.5,0.5 L15,1.2 Q7,7 4.5,14.5 Q3,16 1.5,14.5 Z" fill="#e02a14"/><path d="M0.5,2.2 Q2.5,0 6,2.5 Q9,5 12.8,12.8 L12,13 Q8.5,7.5 5.5,5 Q3,3.5 0.5,3.5 Z" fill="#e23a20"/><path d="M1,2.5 Q3,1.5 5,3" stroke="#f08060" stroke-width="1.4" fill="none"/></g><g transform="translate(637,483)"><rect x="0.5" y="2.5" width="9" height="11" fill="#fff" stroke="#1890d8"/><path d="M5,3 L12,0 V13 L5,15.5 Z" fill="url(#gdoor)" stroke="#0868b0" stroke-width="0.6"/><circle cx="6.5" cy="9.5" r="0.7" fill="#fff"/></g></svg>
</body></html>
